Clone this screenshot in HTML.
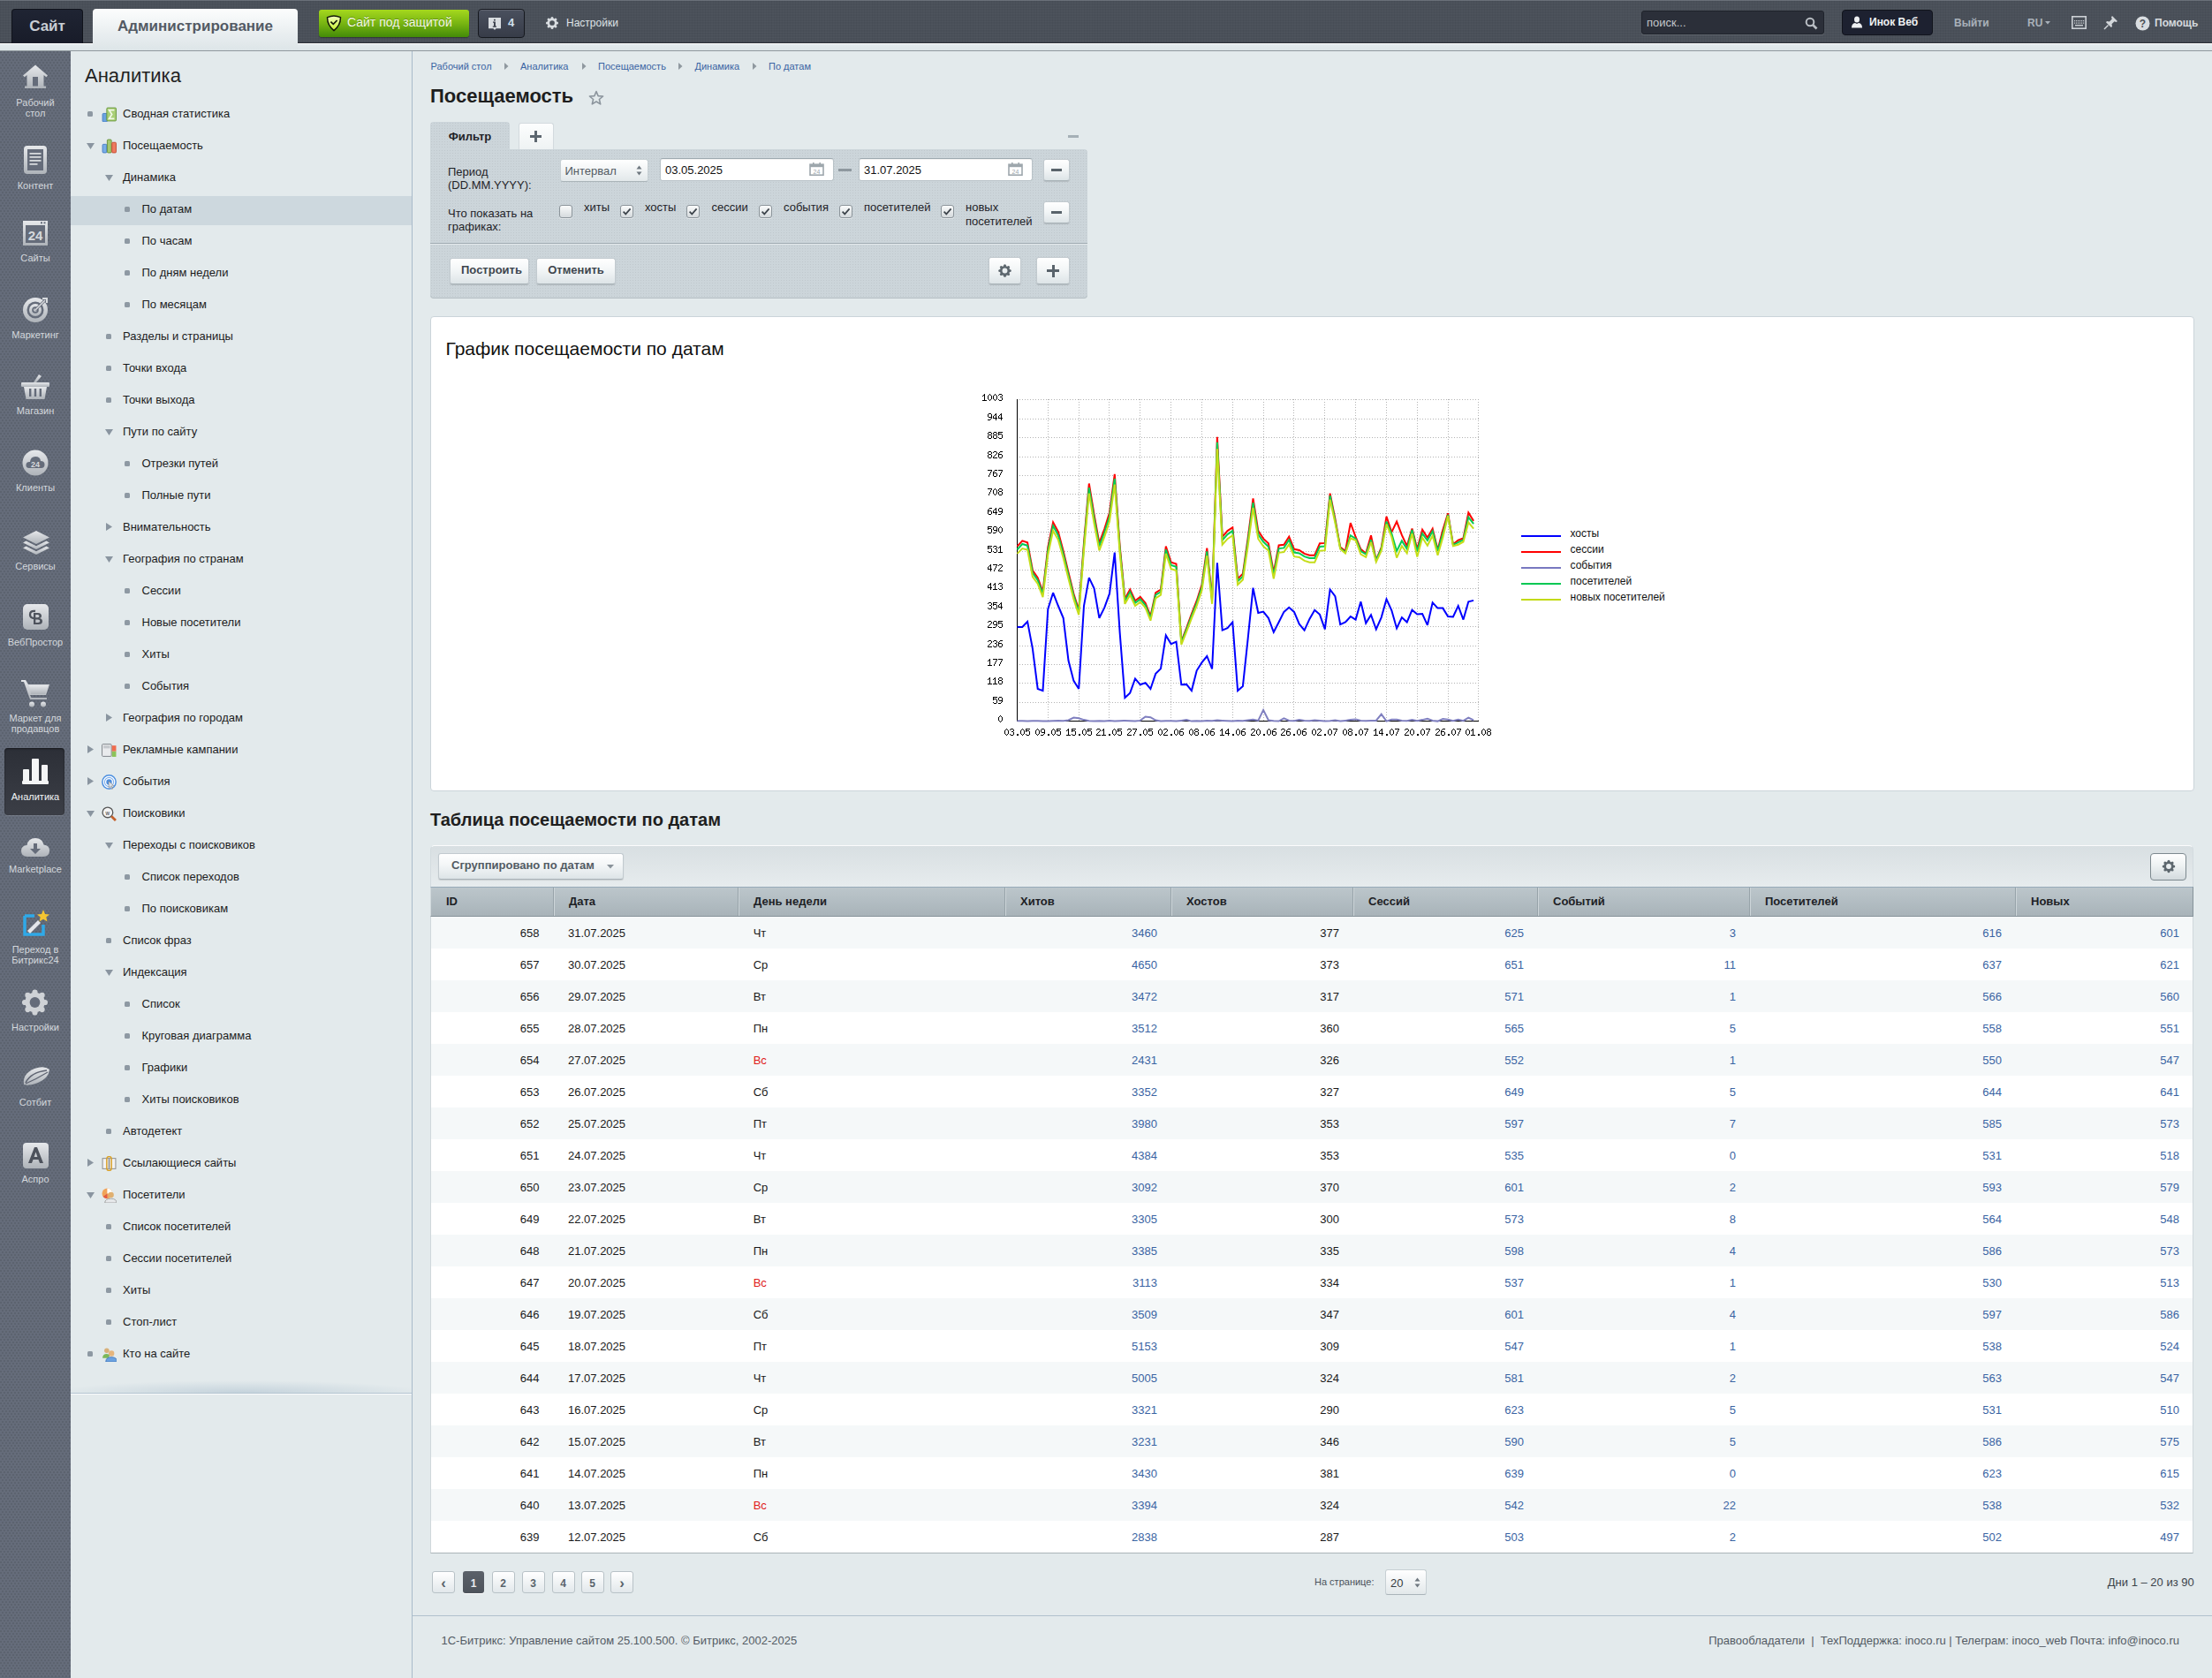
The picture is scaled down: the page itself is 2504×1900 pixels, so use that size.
<!DOCTYPE html>
<html lang="ru"><head><meta charset="utf-8"><title>Посещаемость</title>
<style>
*{box-sizing:border-box}
html,body{margin:0;padding:0}
body{width:2504px;height:1900px;overflow:hidden;position:relative;background:#e3eaec;font-family:"Liberation Sans",sans-serif;color:#000}
.a{position:absolute}
.t{position:absolute;white-space:nowrap;line-height:1}
/* header */
#hdr{left:0;top:0;width:2504px;height:49px;background-color:#4a5059;box-shadow:inset 0 1px 0 #6a7079,inset 0 -1px 0 #2b2f37;
 background-image:repeating-linear-gradient(0deg,rgba(255,255,255,.025) 0 1px,transparent 1px 3px),repeating-linear-gradient(90deg,rgba(0,0,0,.04) 0 1px,transparent 1px 3px);}
#strip{left:0;top:49px;width:2504px;height:9px;background:linear-gradient(#fdfefe 0,#fdfefe 1px,#e4ebee 1px,#dde5e8 100%);border-bottom:1px solid #8f989d}
#side{left:0;top:58px;width:80px;height:1842px;background:#656c7a;
 background-image:radial-gradient(circle at 1px 1px,rgba(0,0,0,.09) 0.7px,transparent 1px),radial-gradient(circle at 3px 4px,rgba(0,0,0,.09) 0.7px,transparent 1px);background-size:4px 6px}
#menu{left:80px;top:58px;width:387px;height:1842px;background:#e3eaec;border-right:1px solid #a9bbca}
#content{left:467px;top:58px;width:2037px;height:1842px;background:#e3eaec}
.sl{position:absolute;left:0;width:80px;text-align:center;font-size:11px;line-height:12px;color:#d3d7dc}
.mi{position:absolute;left:0;width:386px;height:36px;font-size:13px;line-height:36px;color:#1a1a1a;white-space:nowrap}
.mi .tx{position:absolute;top:0}
.bul{position:absolute;width:6px;height:6px;border-radius:1.5px;background:#8e99a3;top:15px}
.tri{position:absolute;top:15px;width:0;height:0;border-left:5px solid transparent;border-right:5px solid transparent;border-top:7px solid #8a95a0}
.trir{position:absolute;top:13px;width:0;height:0;border-top:5px solid transparent;border-bottom:5px solid transparent;border-left:7px solid #8a95a0}
.ico{position:absolute;top:10px;width:17px;height:17px}
</style></head><body>
<div id="hdr" class="a">
<div class="a" style="left:13px;top:10px;width:81px;height:39px;background:linear-gradient(#1f2433,#181c29);border:1px solid #10131b;border-bottom:none;border-radius:4px 4px 0 0;"></div>
<div class="t" style="left:13.0px;top:20.61px;font-size:17px;color:#c9ced4;font-weight:bold;width:81px;text-align:center;">Сайт</div>
<div class="a" style="left:105px;top:10px;width:232px;height:47px;background:linear-gradient(#fcfdfd,#e9eef0 60%,#dde5e8);border-radius:4px 4px 0 0;z-index:2"></div>
<div class="t" style="left:105.0px;top:20.61px;font-size:17px;color:#535a64;font-weight:bold;width:232px;text-align:center;z-index:3">Администрирование</div>
<div class="a" style="left:361px;top:11px;width:170px;height:31px;background:linear-gradient(#a5d81e,#78b512 50%,#438b08);border-radius:3px;box-shadow:0 1px 1px rgba(0,0,0,.35);"></div>
<svg class="a" style="left:369px;top:16px" width="18" height="20" viewBox="0 0 18 20"><defs><linearGradient id="shg" x1="0" y1="0" x2="0" y2="1"><stop offset="0" stop-color="#f4ffc0"/><stop offset="1" stop-color="#c4f02a"/></linearGradient></defs><path d="M1.6 3.6 Q9 0.4 16.4 3.6 Q16.8 12 9 18.6 Q1.2 12 1.6 3.6 Z" fill="url(#shg)" stroke="#141a0a" stroke-width="1.5"/><path d="M5.4 8.6 L8.3 11.4 L12.6 7" fill="none" stroke="#141a0a" stroke-width="1.7"/></svg>
<div class="t" style="left:393px;top:18.15px;font-size:14px;color:#f3f8e6;text-shadow:0 -1px 0 rgba(0,0,0,.25)">Сайт под защитой</div>
<div class="a" style="left:541px;top:10px;width:53px;height:33px;background:linear-gradient(#4a505e,#373c48);border:1px solid #16191f;border-radius:4px;box-shadow:inset 0 1px 0 rgba(255,255,255,.12);"></div>
<svg class="a" style="left:552px;top:19px" width="16" height="16" viewBox="0 0 16 16"><path d="M1 1 H15 V13.2 H9.6 L8 14.9 L6.4 13.2 H1 Z" fill="#d9dde1"/><rect x="7" y="2.8" width="1.8" height="1.7" fill="#3a3f4b"/><path d="M6 5.6 H8.9 V10.6 H10 V11.8 H5.8 V10.6 H7 V6.8 H6 Z" fill="#3a3f4b"/></svg>
<div class="t" style="left:575px;top:19.00px;font-size:13px;color:#d3e0ee;font-weight:bold;">4</div>
<svg class="a" style="left:0;top:0;overflow:visible" width="1" height="1"><circle cx="625" cy="26" r="5.44" fill="#d9dde1"/><circle cx="630.58" cy="26.00" r="1.50" fill="#d9dde1"/><circle cx="628.94" cy="29.94" r="1.50" fill="#d9dde1"/><circle cx="625.00" cy="31.58" r="1.50" fill="#d9dde1"/><circle cx="621.06" cy="29.94" r="1.50" fill="#d9dde1"/><circle cx="619.42" cy="26.00" r="1.50" fill="#d9dde1"/><circle cx="621.06" cy="22.06" r="1.50" fill="#d9dde1"/><circle cx="625.00" cy="20.42" r="1.50" fill="#d9dde1"/><circle cx="628.94" cy="22.06" r="1.50" fill="#d9dde1"/><circle cx="625" cy="26" r="2.86" fill="#4a5059"/></svg>
<div class="t" style="left:641px;top:19.84px;font-size:12px;color:#dfe3e7;">Настройки</div>
<div class="a" style="left:1858px;top:12px;width:207px;height:27px;background:#2b2f39;border:1px solid #1f232b;border-radius:3px;box-shadow:0 1px 0 rgba(255,255,255,.12);"></div>
<div class="t" style="left:1864px;top:19.00px;font-size:13px;color:#c3c7cc;">поиск...</div>
<svg class="a" style="left:2043px;top:19px" width="15" height="15" viewBox="0 0 15 15"><circle cx="6" cy="6" r="4.3" fill="none" stroke="#b9bec4" stroke-width="2"/><path d="M9 9 L13.5 13.5" stroke="#b9bec4" stroke-width="2.6"/></svg>
<div class="a" style="left:2085px;top:11px;width:103px;height:29px;background:#1d2130;border:1px solid #11141c;border-radius:4px;"></div>
<svg class="a" style="left:2095px;top:18px" width="14" height="14" viewBox="0 0 14 14"><ellipse cx="7" cy="4" rx="3" ry="3.6" fill="#eef0f2"/><path d="M1 13.5 Q1 8.5 5 8 L7 9 L9 8 Q13 8.5 13 13.5 Z" fill="#eef0f2"/></svg>
<div class="t" style="left:2116px;top:18.84px;font-size:12px;color:#f1f3f5;font-weight:bold;">Инок Веб</div>
<div class="t" style="left:2212px;top:19.84px;font-size:12px;color:#a9b1ba;font-weight:bold;">Выйти</div>
<div class="t" style="left:2295px;top:19.84px;font-size:12px;color:#a9b1ba;font-weight:bold;">RU</div>
<svg class="a" style="left:2315px;top:24px" width="6" height="4"><path d="M0 0 H6 L3 3.5Z" fill="#a9b1ba"/></svg>
<svg class="a" style="left:2345px;top:18px" width="17" height="15" viewBox="0 0 17 15"><rect x="0.8" y="0.8" width="15.4" height="13.4" fill="none" stroke="#ccd0d5" stroke-width="1.6"/><rect x="3" y="5" width="1.2" height="1.2" fill="#ccd0d5"/><rect x="5" y="5" width="1.2" height="1.2" fill="#ccd0d5"/><rect x="7" y="5" width="1.2" height="1.2" fill="#ccd0d5"/><rect x="9" y="5" width="1.2" height="1.2" fill="#ccd0d5"/><rect x="11" y="5" width="1.2" height="1.2" fill="#ccd0d5"/><rect x="13" y="5" width="1.2" height="1.2" fill="#ccd0d5"/><rect x="3" y="7.5" width="1.2" height="1.2" fill="#ccd0d5"/><rect x="5" y="7.5" width="1.2" height="1.2" fill="#ccd0d5"/><rect x="7" y="7.5" width="1.2" height="1.2" fill="#ccd0d5"/><rect x="9" y="7.5" width="1.2" height="1.2" fill="#ccd0d5"/><rect x="11" y="7.5" width="1.2" height="1.2" fill="#ccd0d5"/><rect x="13" y="7.5" width="1.2" height="1.2" fill="#ccd0d5"/><rect x="4" y="10" width="9" height="1.4" fill="#ccd0d5"/></svg>
<svg class="a" style="left:2381px;top:17px" width="17" height="17" viewBox="0 0 17 17"><path d="M10 1 L16 7 L14.5 8 L12.5 7.2 L9.5 10.2 L10 13 L8.8 14 L3 8.2 L4 7 L6.8 7.5 L9.8 4.5 L9 2.5 Z" fill="#d3d7db"/><path d="M5.5 11.5 L1 16" stroke="#d3d7db" stroke-width="1.5"/></svg>
<svg class="a" style="left:2417px;top:18px" width="17" height="17" viewBox="0 0 17 17"><circle cx="8.5" cy="8.5" r="8" fill="#d9dde1"/><text x="8.5" y="13" text-anchor="middle" font-family="Liberation Sans" font-weight="bold" font-size="12" fill="#4b5058">?</text></svg>
<div class="t" style="left:2439px;top:19.84px;font-size:12px;color:#d6dade;font-weight:bold;">Помощь</div>
</div>
<div id="strip" class="a"></div>
<div id="side" class="a"></div>
<div class="a" style="left:5px;top:847px;width:68px;height:76px;background:linear-gradient(#2c2f37,#3b3e46);border-radius:4px;box-shadow:inset 0 1px 2px rgba(0,0,0,.5),0 1px 0 rgba(255,255,255,.12);"></div>
<svg class="a" style="left:26px;top:73px" width="28" height="27" viewBox="0 0 28 27"><defs><linearGradient id="sg" x1="0" y1="0" x2="0" y2="1"><stop offset="0" stop-color="#e6e8eb"/><stop offset="1" stop-color="#aeb3b9"/></linearGradient></defs><path d="M14 0.5 L28 12.5 L26.3 14.3 L23.5 12 V24.5 H26 V27 H2 V24.5 H4.5 V12 L1.7 14.3 L0 12.5 Z" fill="url(#sg)"/><rect x="11" y="14" width="6" height="10.5" fill="#656c7a"/></svg>
<svg class="a" style="left:27px;top:165px" width="26" height="32" viewBox="0 0 26 32"><defs><linearGradient id="sg" x1="0" y1="0" x2="0" y2="1"><stop offset="0" stop-color="#e6e8eb"/><stop offset="1" stop-color="#aeb3b9"/></linearGradient></defs><rect x="0" y="0" width="26" height="32" rx="4" fill="url(#sg)"/><rect x="4" y="4" width="18" height="24" fill="#656c7a"/><rect x="6.5" y="8" width="13" height="2" fill="url(#sg)"/><rect x="6.5" y="12" width="13" height="2" fill="url(#sg)"/><rect x="6.5" y="16" width="13" height="2" fill="url(#sg)"/><rect x="6.5" y="20" width="9" height="2" fill="url(#sg)"/></svg>
<svg class="a" style="left:26px;top:250px" width="28" height="28" viewBox="0 0 28 28"><defs><linearGradient id="sg" x1="0" y1="0" x2="0" y2="1"><stop offset="0" stop-color="#e6e8eb"/><stop offset="1" stop-color="#aeb3b9"/></linearGradient></defs><rect x="0" y="0" width="28" height="28" fill="url(#sg)"/><rect x="3" y="5" width="22" height="20" fill="#656c7a"/><rect x="20" y="1.3" width="2" height="2" fill="#656c7a"/><rect x="23.5" y="1.3" width="2" height="2" fill="#656c7a"/><text x="14" y="22" text-anchor="middle" font-family="Liberation Sans" font-weight="bold" font-size="15" fill="#d5d8dc">24</text></svg>
<svg class="a" style="left:25px;top:336px" width="30" height="30" viewBox="0 0 30 30"><defs><linearGradient id="sg" x1="0" y1="0" x2="0" y2="1"><stop offset="0" stop-color="#e6e8eb"/><stop offset="1" stop-color="#aeb3b9"/></linearGradient></defs><circle cx="15" cy="15" r="14" fill="url(#sg)"/><circle cx="15" cy="15" r="9.5" fill="#656c7a"/><circle cx="15" cy="15" r="7" fill="url(#sg)"/><circle cx="15" cy="15" r="3.8" fill="#656c7a"/><circle cx="15" cy="15" r="2" fill="url(#sg)"/><path d="M15 15 L26 4" stroke="#5f6472" stroke-width="3"/><path d="M15 15 L26 4" stroke="#d8dbde" stroke-width="1.6"/><path d="M23 2 L28 2 L28 7" fill="none" stroke="#d8dbde" stroke-width="2"/></svg>
<svg class="a" style="left:24px;top:423px" width="32" height="29" viewBox="0 0 32 29"><defs><linearGradient id="sg" x1="0" y1="0" x2="0" y2="1"><stop offset="0" stop-color="#e6e8eb"/><stop offset="1" stop-color="#aeb3b9"/></linearGradient></defs><path d="M20 1 L23 3 L17 10 L14 10 Z" fill="url(#sg)"/><rect x="0" y="10" width="32" height="5" rx="1" fill="url(#sg)"/><path d="M3 15 H29 L26.5 29 H5.5 Z" fill="url(#sg)"/><rect x="9" y="17" width="2.4" height="9" fill="#656c7a"/><rect x="14.8" y="17" width="2.4" height="9" fill="#656c7a"/><rect x="20.6" y="17" width="2.4" height="9" fill="#656c7a"/></svg>
<svg class="a" style="left:25px;top:509px" width="30" height="30" viewBox="0 0 30 30"><defs><linearGradient id="sg" x1="0" y1="0" x2="0" y2="1"><stop offset="0" stop-color="#e6e8eb"/><stop offset="1" stop-color="#aeb3b9"/></linearGradient></defs><circle cx="15" cy="15" r="14.5" fill="url(#sg)"/><path d="M8 21 Q4 21 4.5 17 Q5 13.5 9 14 Q9.5 8 15 8 Q20.5 8 21 13 Q25.5 13 25.5 17 Q25.5 21 21.5 21 Z" fill="#656c7a"/><text x="15" y="19.5" text-anchor="middle" font-family="Liberation Sans" font-weight="bold" font-size="9" fill="#d5d8dc">24</text></svg>
<svg class="a" style="left:25px;top:600px" width="32" height="30" viewBox="0 0 32 30"><defs><linearGradient id="sg" x1="0" y1="0" x2="0" y2="1"><stop offset="0" stop-color="#e6e8eb"/><stop offset="1" stop-color="#aeb3b9"/></linearGradient></defs><path d="M16 1 L31 8.5 L16 16 L1 8.5 Z" fill="url(#sg)"/><path d="M4.5 12.5 L1 14.5 L16 22 L31 14.5 L27.5 12.5 L16 18.3 Z" fill="url(#sg)"/><path d="M4.5 18.5 L1 20.5 L16 28 L31 20.5 L27.5 18.5 L16 24.3 Z" fill="url(#sg)"/></svg>
<svg class="a" style="left:26px;top:684px" width="29" height="29" viewBox="0 0 29 29"><defs><linearGradient id="sg" x1="0" y1="0" x2="0" y2="1"><stop offset="0" stop-color="#e6e8eb"/><stop offset="1" stop-color="#aeb3b9"/></linearGradient></defs><rect x="0" y="0" width="29" height="29" rx="5" fill="url(#sg)"/><path d="M14 8 Q8 7 8 12 Q8 16 13 16" fill="none" stroke="#4d525c" stroke-width="2.3"/><path d="M12 10 H17 Q21 10 21 13.5 Q21 16 18 16 Q22 16 22 19.5 Q22 23 17.5 23 H12 Z M14.3 17.5 V21 H17 Q19.3 21 19.3 19.2 Q19.3 17.5 17 17.5 Z M14.3 12 V15.3 H16.5 Q18.5 15.3 18.5 13.6 Q18.5 12 16.5 12 Z" fill="#4d525c"/></svg>
<svg class="a" style="left:24px;top:769px" width="32" height="32" viewBox="0 0 32 32"><defs><linearGradient id="sg" x1="0" y1="0" x2="0" y2="1"><stop offset="0" stop-color="#e6e8eb"/><stop offset="1" stop-color="#aeb3b9"/></linearGradient></defs><path d="M0 1 H5 L8 6 H32 L28 18 H10 L11.5 21 H29 V23 H10 L3 3 H0 Z" fill="url(#sg)"/><path d="M9 7 H30 L27 17 H11 Z" fill="url(#sg)"/><circle cx="12" cy="28.5" r="3" fill="url(#sg)"/><circle cx="25" cy="28.5" r="3" fill="url(#sg)"/></svg>
<svg class="a" style="left:24px;top:858px" width="32" height="31" viewBox="0 0 32 31"><defs><linearGradient id="sg" x1="0" y1="0" x2="0" y2="1"><stop offset="0" stop-color="#e6e8eb"/><stop offset="1" stop-color="#aeb3b9"/></linearGradient></defs><rect x="1" y="26" width="30" height="4" rx="1" fill="#f4f5f6"/><rect x="2" y="13" width="7" height="14" rx="1" fill="#f4f5f6"/><rect x="12" y="1" width="8" height="26" rx="1" fill="#f4f5f6"/><rect x="23" y="8" width="7" height="19" rx="1" fill="#f4f5f6"/></svg>
<svg class="a" style="left:24px;top:947px" width="32" height="24" viewBox="0 0 32 24"><defs><linearGradient id="sg" x1="0" y1="0" x2="0" y2="1"><stop offset="0" stop-color="#e6e8eb"/><stop offset="1" stop-color="#aeb3b9"/></linearGradient></defs><path d="M7 23 Q0 23 0 16.5 Q0 10.5 6.5 10 Q8 2 16 2 Q24 2 25.5 9.5 Q32 10 32 16.5 Q32 23 25 23 Z" fill="url(#sg)"/><path d="M14 8 H18 V14 H22 L16 20 L10 14 H14 Z" fill="#656c7a"/></svg>
<svg class="a" style="left:25px;top:1029px" width="32" height="31" viewBox="0 0 32 31"><defs><linearGradient id="sg" x1="0" y1="0" x2="0" y2="1"><stop offset="0" stop-color="#e6e8eb"/><stop offset="1" stop-color="#aeb3b9"/></linearGradient></defs><path d="M3 8 V29 H24 V18" fill="none" stroke="#2fa9e8" stroke-width="3.5"/><path d="M3 8 H14" stroke="#2fa9e8" stroke-width="3.5"/><path d="M6 25 L18 13 L21 16 L9 28 Z" fill="#e3e6ea"/><path d="M24 1 L26 6 L31 6.5 L27.3 9.5 L28.5 14.5 L24 11.8 L19.5 14.5 L20.7 9.5 L17 6.5 L22 6 Z" fill="#f4c531"/></svg>
<svg class="a" style="left:0;top:0;overflow:visible" width="1" height="1"><circle cx="39.5" cy="1135" r="11.20" fill="#cfd2d6"/><circle cx="50.98" cy="1135.00" r="3.08" fill="#cfd2d6"/><circle cx="47.62" cy="1143.12" r="3.08" fill="#cfd2d6"/><circle cx="39.50" cy="1146.48" r="3.08" fill="#cfd2d6"/><circle cx="31.38" cy="1143.12" r="3.08" fill="#cfd2d6"/><circle cx="28.02" cy="1135.00" r="3.08" fill="#cfd2d6"/><circle cx="31.38" cy="1126.88" r="3.08" fill="#cfd2d6"/><circle cx="39.50" cy="1123.52" r="3.08" fill="#cfd2d6"/><circle cx="47.62" cy="1126.88" r="3.08" fill="#cfd2d6"/><circle cx="39.5" cy="1135" r="5.88" fill="#656c7a"/></svg>
<svg class="a" style="left:25px;top:1206px" width="32" height="25" viewBox="0 0 32 25"><defs><linearGradient id="sg" x1="0" y1="0" x2="0" y2="1"><stop offset="0" stop-color="#e6e8eb"/><stop offset="1" stop-color="#aeb3b9"/></linearGradient></defs><path d="M2 22 Q0 10 14 4 Q25 0 31 5 Q30 15 18 20 Q8 24 2 22 Z" fill="url(#sg)"/><path d="M4 20 Q10 8 28 6" fill="none" stroke="#5f6472" stroke-width="1.6"/><path d="M4 21 Q16 16 29 8" fill="none" stroke="#5f6472" stroke-width="1.2"/></svg>
<svg class="a" style="left:26px;top:1294px" width="29" height="29" viewBox="0 0 29 29"><defs><linearGradient id="sg" x1="0" y1="0" x2="0" y2="1"><stop offset="0" stop-color="#e6e8eb"/><stop offset="1" stop-color="#aeb3b9"/></linearGradient></defs><rect x="0" y="0" width="29" height="29" rx="4" fill="url(#sg)"/><path d="M6 23 L13 5 H16 L23 23 H19 L17.5 19 H11.5 L10 23 Z M12.6 16 H16.4 L14.5 10.5 Z" fill="#4d525c"/></svg>
<div class="t" style="left:0.0px;top:111.19px;font-size:11px;color:#d4d8dd;width:80px;text-align:center;">Рабочий</div>
<div class="t" style="left:0.0px;top:123.19px;font-size:11px;color:#d4d8dd;width:80px;text-align:center;">стол</div>
<div class="t" style="left:0.0px;top:204.69px;font-size:11px;color:#d4d8dd;width:80px;text-align:center;">Контент</div>
<div class="t" style="left:0.0px;top:286.69px;font-size:11px;color:#d4d8dd;width:80px;text-align:center;">Сайты</div>
<div class="t" style="left:0.0px;top:373.69px;font-size:11px;color:#d4d8dd;width:80px;text-align:center;">Маркетинг</div>
<div class="t" style="left:0.0px;top:459.69px;font-size:11px;color:#d4d8dd;width:80px;text-align:center;">Магазин</div>
<div class="t" style="left:0.0px;top:546.69px;font-size:11px;color:#d4d8dd;width:80px;text-align:center;">Клиенты</div>
<div class="t" style="left:0.0px;top:635.69px;font-size:11px;color:#d4d8dd;width:80px;text-align:center;">Сервисы</div>
<div class="t" style="left:0.0px;top:721.69px;font-size:11px;color:#d4d8dd;width:80px;text-align:center;">ВебПростор</div>
<div class="t" style="left:0.0px;top:807.69px;font-size:11px;color:#d4d8dd;width:80px;text-align:center;">Маркет для</div>
<div class="t" style="left:0.0px;top:819.69px;font-size:11px;color:#d4d8dd;width:80px;text-align:center;">продавцов</div>
<div class="t" style="left:0.0px;top:896.69px;font-size:11px;color:#f2f4f6;width:80px;text-align:center;">Аналитика</div>
<div class="t" style="left:0.0px;top:978.69px;font-size:11px;color:#d4d8dd;width:80px;text-align:center;">Marketplace</div>
<div class="t" style="left:0.0px;top:1069.69px;font-size:11px;color:#d4d8dd;width:80px;text-align:center;">Переход в</div>
<div class="t" style="left:0.0px;top:1081.69px;font-size:11px;color:#d4d8dd;width:80px;text-align:center;">Битрикс24</div>
<div class="t" style="left:0.0px;top:1157.69px;font-size:11px;color:#d4d8dd;width:80px;text-align:center;">Настройки</div>
<div class="t" style="left:0.0px;top:1242.69px;font-size:11px;color:#d4d8dd;width:80px;text-align:center;">Сотбит</div>
<div class="t" style="left:0.0px;top:1329.69px;font-size:11px;color:#d4d8dd;width:80px;text-align:center;">Аспро</div>
<div id="menu" class="a"></div>
<div class="t" style="left:96px;top:75.38px;font-size:22px;color:#222;">Аналитика</div>
<div class="a" style="left:80px;top:222px;width:386px;height:33px;background:#cdd8de;"></div>
<div class="a" style="left:99px;top:126px;width:6px;height:6px;background:#8e99a3;border-radius:1.5px;"></div>
<svg class="a" style="left:115px;top:120.7px" width="17" height="17" viewBox="0 0 16 16"><rect x="1" y="7" width="5" height="9" rx="1" fill="#6aa2e0" stroke="#3f78c0" stroke-width=".8"/><rect x="5.5" y="1" width="10" height="14" rx="1" fill="#a9cf76" stroke="#5f8f33" stroke-width=".8"/><path d="M13.5 3.5 H8 L11 8 L8 12.5 H13.5" fill="none" stroke="#f2f8e8" stroke-width="1.6"/></svg>
<div class="t" style="left:139px;top:122.10px;font-size:13px;color:#1c1c1c;">Сводная статистика</div>
<svg class="a" style="left:97.5px;top:162.2px" width="9" height="7"><path d="M0 0 H9 L4.5 7 Z" fill="#8a95a0"/></svg>
<svg class="a" style="left:115px;top:156.7px" width="17" height="17" viewBox="0 0 16 16"><rect x="1" y="6" width="4.5" height="9" rx="1" fill="#79aee8" stroke="#3c74c0" stroke-width=".8"/><rect x="6" y="1" width="4.5" height="14" rx="1" fill="#a5c86f" stroke="#5d8a2f" stroke-width=".8"/><rect x="11" y="4" width="4.5" height="11" rx="1" fill="#ee7a5f" stroke="#c0452c" stroke-width=".8"/></svg>
<div class="t" style="left:139px;top:158.10px;font-size:13px;color:#1c1c1c;">Посещаемость</div>
<svg class="a" style="left:118.5px;top:198.2px" width="9" height="7"><path d="M0 0 H9 L4.5 7 Z" fill="#8a95a0"/></svg>
<div class="t" style="left:139px;top:194.10px;font-size:13px;color:#1c1c1c;">Динамика</div>
<div class="a" style="left:141px;top:234px;width:6px;height:6px;background:#8e99a3;border-radius:1.5px;"></div>
<div class="t" style="left:160.5px;top:230.10px;font-size:13px;color:#1c1c1c;">По датам</div>
<div class="a" style="left:141px;top:270px;width:6px;height:6px;background:#8e99a3;border-radius:1.5px;"></div>
<div class="t" style="left:160.5px;top:266.10px;font-size:13px;color:#1c1c1c;">По часам</div>
<div class="a" style="left:141px;top:306px;width:6px;height:6px;background:#8e99a3;border-radius:1.5px;"></div>
<div class="t" style="left:160.5px;top:302.10px;font-size:13px;color:#1c1c1c;">По дням недели</div>
<div class="a" style="left:141px;top:342px;width:6px;height:6px;background:#8e99a3;border-radius:1.5px;"></div>
<div class="t" style="left:160.5px;top:338.10px;font-size:13px;color:#1c1c1c;">По месяцам</div>
<div class="a" style="left:120px;top:378px;width:6px;height:6px;background:#8e99a3;border-radius:1.5px;"></div>
<div class="t" style="left:139px;top:374.10px;font-size:13px;color:#1c1c1c;">Разделы и страницы</div>
<div class="a" style="left:120px;top:414px;width:6px;height:6px;background:#8e99a3;border-radius:1.5px;"></div>
<div class="t" style="left:139px;top:410.10px;font-size:13px;color:#1c1c1c;">Точки входа</div>
<div class="a" style="left:120px;top:450px;width:6px;height:6px;background:#8e99a3;border-radius:1.5px;"></div>
<div class="t" style="left:139px;top:446.10px;font-size:13px;color:#1c1c1c;">Точки выхода</div>
<svg class="a" style="left:118.5px;top:486.2px" width="9" height="7"><path d="M0 0 H9 L4.5 7 Z" fill="#8a95a0"/></svg>
<div class="t" style="left:139px;top:482.10px;font-size:13px;color:#1c1c1c;">Пути по сайту</div>
<div class="a" style="left:141px;top:522px;width:6px;height:6px;background:#8e99a3;border-radius:1.5px;"></div>
<div class="t" style="left:160.5px;top:518.10px;font-size:13px;color:#1c1c1c;">Отрезки путей</div>
<div class="a" style="left:141px;top:558px;width:6px;height:6px;background:#8e99a3;border-radius:1.5px;"></div>
<div class="t" style="left:160.5px;top:554.10px;font-size:13px;color:#1c1c1c;">Полные пути</div>
<svg class="a" style="left:120px;top:592.2px" width="7" height="9"><path d="M0 0 V9 L7 4.5 Z" fill="#8a95a0"/></svg>
<div class="t" style="left:139px;top:590.10px;font-size:13px;color:#1c1c1c;">Внимательность</div>
<svg class="a" style="left:118.5px;top:630.2px" width="9" height="7"><path d="M0 0 H9 L4.5 7 Z" fill="#8a95a0"/></svg>
<div class="t" style="left:139px;top:626.10px;font-size:13px;color:#1c1c1c;">География по странам</div>
<div class="a" style="left:141px;top:666px;width:6px;height:6px;background:#8e99a3;border-radius:1.5px;"></div>
<div class="t" style="left:160.5px;top:662.10px;font-size:13px;color:#1c1c1c;">Сессии</div>
<div class="a" style="left:141px;top:702px;width:6px;height:6px;background:#8e99a3;border-radius:1.5px;"></div>
<div class="t" style="left:160.5px;top:698.10px;font-size:13px;color:#1c1c1c;">Новые посетители</div>
<div class="a" style="left:141px;top:738px;width:6px;height:6px;background:#8e99a3;border-radius:1.5px;"></div>
<div class="t" style="left:160.5px;top:734.10px;font-size:13px;color:#1c1c1c;">Хиты</div>
<div class="a" style="left:141px;top:774px;width:6px;height:6px;background:#8e99a3;border-radius:1.5px;"></div>
<div class="t" style="left:160.5px;top:770.10px;font-size:13px;color:#1c1c1c;">События</div>
<svg class="a" style="left:120px;top:808.2px" width="7" height="9"><path d="M0 0 V9 L7 4.5 Z" fill="#8a95a0"/></svg>
<div class="t" style="left:139px;top:806.10px;font-size:13px;color:#1c1c1c;">География по городам</div>
<svg class="a" style="left:99px;top:844.2px" width="7" height="9"><path d="M0 0 V9 L7 4.5 Z" fill="#8a95a0"/></svg>
<svg class="a" style="left:115px;top:840.7px" width="17" height="17" viewBox="0 0 16 16"><rect x="0.5" y="1.5" width="10" height="13" rx="1" fill="#e9ebed" stroke="#7d8288" stroke-width=".9"/><rect x="2" y="3" width="7" height="3" fill="#c4c8cc"/><rect x="11" y="9" width="4.5" height="6" fill="#8cc35a"/><rect x="11" y="3" width="4.5" height="6" fill="#ef6d4f"/></svg>
<div class="t" style="left:139px;top:842.10px;font-size:13px;color:#1c1c1c;">Рекламные кампании</div>
<svg class="a" style="left:99px;top:880.2px" width="7" height="9"><path d="M0 0 V9 L7 4.5 Z" fill="#8a95a0"/></svg>
<svg class="a" style="left:115px;top:876.7px" width="17" height="17" viewBox="0 0 16 16"><circle cx="8" cy="8" r="7.2" fill="#fff" stroke="#4d8fe0" stroke-width="1.4"/><circle cx="8" cy="8" r="4.8" fill="none" stroke="#7fb0ec" stroke-width="1"/><circle cx="8" cy="8" r="3" fill="#4d8fe0"/><path d="M7.5 7 L13 12 L10.5 12.3 L12 15 L11 15.5 L9.6 12.8 L7.8 14.5 Z" fill="#dfe2e5" stroke="#777" stroke-width=".5"/></svg>
<div class="t" style="left:139px;top:878.10px;font-size:13px;color:#1c1c1c;">События</div>
<svg class="a" style="left:97.5px;top:918.2px" width="9" height="7"><path d="M0 0 H9 L4.5 7 Z" fill="#8a95a0"/></svg>
<svg class="a" style="left:115px;top:912.7px" width="17" height="17" viewBox="0 0 16 16"><circle cx="6.5" cy="6.5" r="5.5" fill="#f4f4f4" stroke="#555" stroke-width="1.2"/><path d="M10.5 10.5 L15 15" stroke="#c5612c" stroke-width="2.6"/><text x="6.5" y="9" text-anchor="middle" font-size="6" font-family="Liberation Sans" fill="#333">w</text></svg>
<div class="t" style="left:139px;top:914.10px;font-size:13px;color:#1c1c1c;">Поисковики</div>
<svg class="a" style="left:118.5px;top:954.2px" width="9" height="7"><path d="M0 0 H9 L4.5 7 Z" fill="#8a95a0"/></svg>
<div class="t" style="left:139px;top:950.10px;font-size:13px;color:#1c1c1c;">Переходы с поисковиков</div>
<div class="a" style="left:141px;top:990px;width:6px;height:6px;background:#8e99a3;border-radius:1.5px;"></div>
<div class="t" style="left:160.5px;top:986.10px;font-size:13px;color:#1c1c1c;">Список переходов</div>
<div class="a" style="left:141px;top:1026px;width:6px;height:6px;background:#8e99a3;border-radius:1.5px;"></div>
<div class="t" style="left:160.5px;top:1022.10px;font-size:13px;color:#1c1c1c;">По поисковикам</div>
<div class="a" style="left:120px;top:1062px;width:6px;height:6px;background:#8e99a3;border-radius:1.5px;"></div>
<div class="t" style="left:139px;top:1058.10px;font-size:13px;color:#1c1c1c;">Список фраз</div>
<svg class="a" style="left:118.5px;top:1098.2px" width="9" height="7"><path d="M0 0 H9 L4.5 7 Z" fill="#8a95a0"/></svg>
<div class="t" style="left:139px;top:1094.10px;font-size:13px;color:#1c1c1c;">Индексация</div>
<div class="a" style="left:141px;top:1134px;width:6px;height:6px;background:#8e99a3;border-radius:1.5px;"></div>
<div class="t" style="left:160.5px;top:1130.10px;font-size:13px;color:#1c1c1c;">Список</div>
<div class="a" style="left:141px;top:1170px;width:6px;height:6px;background:#8e99a3;border-radius:1.5px;"></div>
<div class="t" style="left:160.5px;top:1166.10px;font-size:13px;color:#1c1c1c;">Круговая диаграмма</div>
<div class="a" style="left:141px;top:1206px;width:6px;height:6px;background:#8e99a3;border-radius:1.5px;"></div>
<div class="t" style="left:160.5px;top:1202.10px;font-size:13px;color:#1c1c1c;">Графики</div>
<div class="a" style="left:141px;top:1242px;width:6px;height:6px;background:#8e99a3;border-radius:1.5px;"></div>
<div class="t" style="left:160.5px;top:1238.10px;font-size:13px;color:#1c1c1c;">Хиты поисковиков</div>
<div class="a" style="left:120px;top:1278px;width:6px;height:6px;background:#8e99a3;border-radius:1.5px;"></div>
<div class="t" style="left:139px;top:1274.10px;font-size:13px;color:#1c1c1c;">Автодетект</div>
<svg class="a" style="left:99px;top:1312.2px" width="7" height="9"><path d="M0 0 V9 L7 4.5 Z" fill="#8a95a0"/></svg>
<svg class="a" style="left:115px;top:1308.7px" width="17" height="17" viewBox="0 0 16 16"><rect x="1" y="2.5" width="14" height="11" fill="#f2f2f2" stroke="#8a8a8a" stroke-width=".9"/><rect x="5.5" y="0.5" width="5" height="15" rx="2.5" fill="none" stroke="#d9a12a" stroke-width="1.4"/><rect x="7.3" y="3" width="1.4" height="10" fill="#888"/></svg>
<div class="t" style="left:139px;top:1310.10px;font-size:13px;color:#1c1c1c;">Ссылающиеся сайты</div>
<svg class="a" style="left:97.5px;top:1350.2px" width="9" height="7"><path d="M0 0 H9 L4.5 7 Z" fill="#8a95a0"/></svg>
<svg class="a" style="left:115px;top:1344.7px" width="17" height="17" viewBox="0 0 16 16"><circle cx="6" cy="6" r="5.5" fill="#f0a45a"/><path d="M6 6 L6 0.5 A5.5 5.5 0 0 1 11.5 6 Z" fill="#fff"/><path d="M6 6 L1.5 9.5 A5.5 5.5 0 0 0 6 11.5 Z" fill="#e25c45"/><circle cx="10" cy="7.5" r="3" fill="#e0b070"/><path d="M3.5 16 Q3.5 11.5 10 11.5 Q16 11.5 16 16 Z" fill="#e6e8ea" stroke="#999" stroke-width=".8"/></svg>
<div class="t" style="left:139px;top:1346.10px;font-size:13px;color:#1c1c1c;">Посетители</div>
<div class="a" style="left:120px;top:1386px;width:6px;height:6px;background:#8e99a3;border-radius:1.5px;"></div>
<div class="t" style="left:139px;top:1382.10px;font-size:13px;color:#1c1c1c;">Список посетителей</div>
<div class="a" style="left:120px;top:1422px;width:6px;height:6px;background:#8e99a3;border-radius:1.5px;"></div>
<div class="t" style="left:139px;top:1418.10px;font-size:13px;color:#1c1c1c;">Сессии посетителей</div>
<div class="a" style="left:120px;top:1458px;width:6px;height:6px;background:#8e99a3;border-radius:1.5px;"></div>
<div class="t" style="left:139px;top:1454.10px;font-size:13px;color:#1c1c1c;">Хиты</div>
<div class="a" style="left:120px;top:1494px;width:6px;height:6px;background:#8e99a3;border-radius:1.5px;"></div>
<div class="t" style="left:139px;top:1490.10px;font-size:13px;color:#1c1c1c;">Стоп-лист</div>
<div class="a" style="left:99px;top:1530px;width:6px;height:6px;background:#8e99a3;border-radius:1.5px;"></div>
<svg class="a" style="left:115px;top:1524.7px" width="17" height="17" viewBox="0 0 16 16"><circle cx="5.5" cy="4" r="2.6" fill="#d8b07a"/><path d="M1 12 Q1 7.5 5.5 7.5 Q8 7.5 9 9 L7 12 Z" fill="#7cb85a"/><circle cx="10.5" cy="7" r="3" fill="#e5b57d"/><path d="M4.5 16 Q4.5 11 10.5 11 Q16.5 11 16.5 16 Z" fill="#6ba2e0" stroke="#3d74b8" stroke-width=".8"/></svg>
<div class="t" style="left:139px;top:1526.10px;font-size:13px;color:#1c1c1c;">Кто на сайте</div>
<div class="a" style="left:80px;top:1563px;width:386px;height:14px;background:radial-gradient(ellipse 55% 100% at 50% 100%,rgba(150,175,195,.4),rgba(150,175,195,0) 100%);"></div>
<div class="a" style="left:80px;top:1577px;width:386px;height:2px;border-top:1px solid #b3c4d0;border-bottom:1px solid #fbfcfd;"></div>
<div id="content" class="a"></div>
<div class="t" style="left:487.5px;top:69.69px;font-size:11px;color:#3a64a3;">Рабочий стол</div>
<div class="t" style="left:589px;top:69.69px;font-size:11px;color:#3a64a3;">Аналитика</div>
<div class="t" style="left:677px;top:69.69px;font-size:11px;color:#3a64a3;">Посещаемость</div>
<div class="t" style="left:786.5px;top:69.69px;font-size:11px;color:#3a64a3;">Динамика</div>
<div class="t" style="left:870px;top:69.69px;font-size:11px;color:#3a64a3;">По датам</div>
<svg class="a" style="left:571px;top:71px" width="5" height="8"><path d="M0 0 L4.5 4 L0 8Z" fill="#8f989f"/></svg>
<svg class="a" style="left:659px;top:71px" width="5" height="8"><path d="M0 0 L4.5 4 L0 8Z" fill="#8f989f"/></svg>
<svg class="a" style="left:768px;top:71px" width="5" height="8"><path d="M0 0 L4.5 4 L0 8Z" fill="#8f989f"/></svg>
<svg class="a" style="left:852px;top:71px" width="5" height="8"><path d="M0 0 L4.5 4 L0 8Z" fill="#8f989f"/></svg>
<div class="t" style="left:487px;top:98.38px;font-size:22px;color:#1e1e1e;font-weight:bold;">Посещаемость</div>
<svg class="a" style="left:666px;top:102px" width="18" height="18" viewBox="0 0 18 18"><path d="M9 1.5 L11.1 6.6 L16.6 7 L12.4 10.5 L13.7 15.9 L9 13 L4.3 15.9 L5.6 10.5 L1.4 7 L6.9 6.6 Z" fill="none" stroke="#8c959d" stroke-width="1.6" stroke-linejoin="round"/></svg>
<div class="a" style="left:487px;top:138px;width:90px;height:32px;background:#ccd5da;background-image:radial-gradient(rgba(0,0,0,.06) 0.7px,transparent 0.9px);background-size:3px 3px;border-radius:4px 4px 0 0;"></div>
<div class="t" style="left:487.0px;top:147.50px;font-size:13px;color:#1f2328;font-weight:bold;width:90px;text-align:center;">Фильтр</div>
<div class="a" style="left:587px;top:139px;width:40px;height:31px;background:linear-gradient(#fdfefe,#eef2f3);border:1px solid #d3dade;border-bottom:none;border-radius:3px 3px 0 0;"></div>
<div class="a" style="left:600px;top:153px;width:13px;height:3px;background:#5d6770;"></div><div class="a" style="left:605px;top:148px;width:3px;height:13px;background:#5d6770;"></div>
<div class="a" style="left:1209px;top:153px;width:12px;height:3px;background:#a5b0b6;"></div>
<div class="a" style="left:487px;top:169px;width:744px;height:168px;background:#ccd5da;background-image:radial-gradient(rgba(0,0,0,.06) 0.7px,transparent 0.9px);background-size:3px 3px;border-radius:0 4px 4px 4px;box-shadow:0 1px 0 #b4bec3;"></div>
<div class="t" style="left:507px;top:188.00px;font-size:13px;color:#1f2328;">Период</div>
<div class="t" style="left:507px;top:202.50px;font-size:13px;color:#1f2328;">(DD.MM.YYYY):</div>
<div class="a" style="left:634px;top:180px;width:100px;height:26px;background:linear-gradient(#ffffff,#f1f4f5 50%,#e2e8ea);border:1px solid #c7d0d4;border-bottom-color:#aab4b9;border-radius:3px;"></div>
<div class="t" style="left:639.5px;top:186.50px;font-size:13px;color:#535b63;">Интервал</div>
<svg class="a" style="left:720px;top:187px" width="7" height="12"><path d="M0.5 4.5 L3.5 0.5 L6.5 4.5Z M0.5 7.5 L3.5 11.5 L6.5 7.5Z" fill="#6f7880"/></svg>
<div class="a" style="left:747px;top:179px;width:197px;height:26px;background:#fff;border:1px solid #b9c3c8;border-top-color:#9ea9af;border-radius:3px;box-shadow:inset 0 1px 1px rgba(0,0,0,.06);"></div>
<div class="t" style="left:753px;top:186.30px;font-size:13px;color:#111;">03.05.2025</div>
<svg class="a" style="left:916px;top:184px" width="17" height="15" viewBox="0 0 17 15"><rect x="1" y="2.2" width="15" height="12" fill="none" stroke="#9ea7ad" stroke-width="1.6"/><rect x="1" y="2.2" width="15" height="3" fill="#9ea7ad"/><rect x="4" y="0" width="1.6" height="3.5" fill="#9ea7ad"/><rect x="11.4" y="0" width="1.6" height="3.5" fill="#9ea7ad"/><text x="8.5" y="12.6" text-anchor="middle" font-family="Liberation Sans" font-size="7" fill="#9ea7ad">24</text></svg>
<div class="a" style="left:972px;top:179px;width:197px;height:26px;background:#fff;border:1px solid #b9c3c8;border-top-color:#9ea9af;border-radius:3px;box-shadow:inset 0 1px 1px rgba(0,0,0,.06);"></div>
<div class="t" style="left:978px;top:186.30px;font-size:13px;color:#111;">31.07.2025</div>
<svg class="a" style="left:1141px;top:184px" width="17" height="15" viewBox="0 0 17 15"><rect x="1" y="2.2" width="15" height="12" fill="none" stroke="#9ea7ad" stroke-width="1.6"/><rect x="1" y="2.2" width="15" height="3" fill="#9ea7ad"/><rect x="4" y="0" width="1.6" height="3.5" fill="#9ea7ad"/><rect x="11.4" y="0" width="1.6" height="3.5" fill="#9ea7ad"/><text x="8.5" y="12.6" text-anchor="middle" font-family="Liberation Sans" font-size="7" fill="#9ea7ad">24</text></svg>
<div class="a" style="left:949px;top:191px;width:15px;height:3px;background:#8e989f;"></div>
<div class="a" style="left:1181px;top:180px;width:30px;height:25px;background:linear-gradient(#ffffff,#f3f6f7 45%,#dde4e7);border:1px solid #c2cacf;border-bottom-color:#a9b3b8;border-radius:3px;box-shadow:0 1px 1px rgba(0,0,0,.12);"></div><div class="a" style="left:1190px;top:191px;width:12px;height:3px;background:#59636b;"></div>
<div class="t" style="left:507px;top:235.00px;font-size:13px;color:#1f2328;">Что показать на</div>
<div class="t" style="left:507px;top:250.00px;font-size:13px;color:#1f2328;">графиках:</div>
<div class="a" style="left:633px;top:232px;width:15px;height:15px;background:linear-gradient(#fafbfb,#d5dadd);border:1px solid #8c959b;border-radius:3px;box-shadow:0 1px 0 rgba(255,255,255,.5);"></div>
<div class="t" style="left:661px;top:228.00px;font-size:13px;color:#1f2328;">хиты</div>
<div class="a" style="left:702px;top:232px;width:15px;height:15px;background:linear-gradient(#fafbfb,#d5dadd);border:1px solid #8c959b;border-radius:3px;box-shadow:0 1px 0 rgba(255,255,255,.5);"></div><svg class="a" style="left:702px;top:232px" width="15" height="15"><path d="M3.6 7.6 L6.3 10.4 L11.6 4.4" fill="none" stroke="#3d444b" stroke-width="1.7"/></svg>
<div class="t" style="left:730px;top:228.00px;font-size:13px;color:#1f2328;">хосты</div>
<div class="a" style="left:777px;top:232px;width:15px;height:15px;background:linear-gradient(#fafbfb,#d5dadd);border:1px solid #8c959b;border-radius:3px;box-shadow:0 1px 0 rgba(255,255,255,.5);"></div><svg class="a" style="left:777px;top:232px" width="15" height="15"><path d="M3.6 7.6 L6.3 10.4 L11.6 4.4" fill="none" stroke="#3d444b" stroke-width="1.7"/></svg>
<div class="t" style="left:805.5px;top:228.00px;font-size:13px;color:#1f2328;">сессии</div>
<div class="a" style="left:859px;top:232px;width:15px;height:15px;background:linear-gradient(#fafbfb,#d5dadd);border:1px solid #8c959b;border-radius:3px;box-shadow:0 1px 0 rgba(255,255,255,.5);"></div><svg class="a" style="left:859px;top:232px" width="15" height="15"><path d="M3.6 7.6 L6.3 10.4 L11.6 4.4" fill="none" stroke="#3d444b" stroke-width="1.7"/></svg>
<div class="t" style="left:887px;top:228.00px;font-size:13px;color:#1f2328;">события</div>
<div class="a" style="left:950px;top:232px;width:15px;height:15px;background:linear-gradient(#fafbfb,#d5dadd);border:1px solid #8c959b;border-radius:3px;box-shadow:0 1px 0 rgba(255,255,255,.5);"></div><svg class="a" style="left:950px;top:232px" width="15" height="15"><path d="M3.6 7.6 L6.3 10.4 L11.6 4.4" fill="none" stroke="#3d444b" stroke-width="1.7"/></svg>
<div class="t" style="left:978px;top:228.00px;font-size:13px;color:#1f2328;">посетителей</div>
<div class="a" style="left:1065px;top:232px;width:15px;height:15px;background:linear-gradient(#fafbfb,#d5dadd);border:1px solid #8c959b;border-radius:3px;box-shadow:0 1px 0 rgba(255,255,255,.5);"></div><svg class="a" style="left:1065px;top:232px" width="15" height="15"><path d="M3.6 7.6 L6.3 10.4 L11.6 4.4" fill="none" stroke="#3d444b" stroke-width="1.7"/></svg>
<div class="t" style="left:1093px;top:228.00px;font-size:13px;color:#1f2328;">новых</div>
<div class="t" style="left:1093px;top:244.00px;font-size:13px;color:#1f2328;">посетителей</div>
<div class="a" style="left:1181px;top:228px;width:30px;height:25px;background:linear-gradient(#ffffff,#f3f6f7 45%,#dde4e7);border:1px solid #c2cacf;border-bottom-color:#a9b3b8;border-radius:3px;box-shadow:0 1px 1px rgba(0,0,0,.12);"></div><div class="a" style="left:1190px;top:239px;width:12px;height:3px;background:#59636b;"></div>
<div class="a" style="left:487px;top:275px;width:744px;height:2px;border-top:1px solid #9eaab0;border-bottom:1px solid #e4e9ec;"></div>
<div class="a" style="left:509px;top:292px;width:90px;height:30px;background:linear-gradient(#ffffff,#f3f6f7 45%,#dde4e7);border:1px solid #c2cacf;border-bottom-color:#a9b3b8;border-radius:3px;box-shadow:0 1px 1px rgba(0,0,0,.12);"></div>
<div class="t" style="left:511.5px;top:299.00px;font-size:13px;color:#3e464e;font-weight:bold;width:90px;text-align:center;">Построить</div>
<div class="a" style="left:607px;top:292px;width:90px;height:30px;background:linear-gradient(#ffffff,#f3f6f7 45%,#dde4e7);border:1px solid #c2cacf;border-bottom-color:#a9b3b8;border-radius:3px;box-shadow:0 1px 1px rgba(0,0,0,.12);"></div>
<div class="t" style="left:607.0px;top:299.00px;font-size:13px;color:#3e464e;font-weight:bold;width:90px;text-align:center;">Отменить</div>
<div class="a" style="left:1119px;top:291px;width:37px;height:31px;background:linear-gradient(#ffffff,#f3f6f7 45%,#dde4e7);border:1px solid #c2cacf;border-bottom-color:#a9b3b8;border-radius:3px;box-shadow:0 1px 1px rgba(0,0,0,.12);"></div>
<svg class="a" style="left:0;top:0;overflow:visible" width="1" height="1"><circle cx="1137.5" cy="306.5" r="5.60" fill="#5d676e"/><circle cx="1143.24" cy="306.50" r="1.54" fill="#5d676e"/><circle cx="1141.56" cy="310.56" r="1.54" fill="#5d676e"/><circle cx="1137.50" cy="312.24" r="1.54" fill="#5d676e"/><circle cx="1133.44" cy="310.56" r="1.54" fill="#5d676e"/><circle cx="1131.76" cy="306.50" r="1.54" fill="#5d676e"/><circle cx="1133.44" cy="302.44" r="1.54" fill="#5d676e"/><circle cx="1137.50" cy="300.76" r="1.54" fill="#5d676e"/><circle cx="1141.56" cy="302.44" r="1.54" fill="#5d676e"/><circle cx="1137.5" cy="306.5" r="2.94" fill="#e9eef0"/></svg>
<div class="a" style="left:1173px;top:291px;width:38px;height:31px;background:linear-gradient(#ffffff,#f3f6f7 45%,#dde4e7);border:1px solid #c2cacf;border-bottom-color:#a9b3b8;border-radius:3px;box-shadow:0 1px 1px rgba(0,0,0,.12);"></div>
<div class="a" style="left:1185px;top:305px;width:14px;height:3px;background:#59636b;"></div><div class="a" style="left:1190.5px;top:299.5px;width:3px;height:14px;background:#59636b;"></div>
<div class="a" style="left:487px;top:358px;width:1997px;height:538px;background:#fff;border:1px solid #cbd4d9;border-radius:4px;"></div>
<div class="t" style="left:504.5px;top:384.22px;font-size:21px;color:#111;">График посещаемости по датам</div>
<svg class="a" style="left:0;top:0;overflow:visible" width="2504" height="1900">
<path d="M1186.5 452V816 M1221.5 452V816 M1255.5 452V816 M1290.5 452V816 M1325.5 452V816 M1360.5 452V816 M1395.5 452V816 M1430.5 452V816 M1464.5 452V816 M1499.5 452V816 M1534.5 452V816 M1569.5 452V816 M1604.5 452V816 M1639.5 452V816 M1673.5 452V816 M1154 795.5H1675 M1154 773.5H1675 M1154 752.5H1675 M1154 731.5H1675 M1154 709.5H1675 M1154 688.5H1675 M1154 666.5H1675 M1154 645.5H1675 M1154 624.5H1675 M1154 602.5H1675 M1154 581.5H1675 M1154 559.5H1675 M1154 538.5H1675 M1154 517.5H1675 M1154 495.5H1675 M1154 474.5H1675 M1154 452.5H1675" stroke="#b3b3b3" stroke-width="1" stroke-dasharray="1 2" fill="none"/>
<path d="M1151.5 452V816.5H1674" stroke="#000" stroke-width="1" fill="none"/>
<defs><path id="gf0" d="M2 0h1v1h-1zM1 1h1v1h-1zM3 1h1v1h-1zM0 2h1v1h-1zM4 2h1v1h-1zM0 3h1v1h-1zM4 3h1v1h-1zM0 4h1v1h-1zM4 4h1v1h-1zM0 5h1v1h-1zM4 5h1v1h-1zM1 6h1v1h-1zM3 6h1v1h-1zM2 7h1v1h-1z"/><path id="gf1" d="M2 0h1v1h-1zM1 1h2v1h-2zM0 2h1v1h-1zM2 2h1v1h-1zM2 3h1v1h-1zM2 4h1v1h-1zM2 5h1v1h-1zM2 6h1v1h-1zM0 7h5v1h-5z"/><path id="gf2" d="M1 0h3v1h-3zM0 1h1v1h-1zM4 1h1v1h-1zM4 2h1v1h-1zM3 3h1v1h-1zM2 4h1v1h-1zM1 5h1v1h-1zM0 6h1v1h-1zM0 7h5v1h-5z"/><path id="gf3" d="M1 0h3v1h-3zM0 1h1v1h-1zM4 1h1v1h-1zM4 2h1v1h-1zM2 3h2v1h-2zM4 4h1v1h-1zM4 5h1v1h-1zM0 6h1v1h-1zM4 6h1v1h-1zM1 7h3v1h-3z"/><path id="gf4" d="M3 0h1v1h-1zM2 1h2v1h-2zM1 2h1v1h-1zM3 2h1v1h-1zM0 3h1v1h-1zM3 3h1v1h-1zM0 4h1v1h-1zM3 4h1v1h-1zM0 5h5v1h-5zM3 6h1v1h-1zM3 7h1v1h-1z"/><path id="gf5" d="M0 0h5v1h-5zM0 1h1v1h-1zM0 2h4v1h-4zM0 3h1v1h-1zM4 3h1v1h-1zM4 4h1v1h-1zM4 5h1v1h-1zM0 6h1v1h-1zM4 6h1v1h-1zM1 7h3v1h-3z"/><path id="gf6" d="M2 0h3v1h-3zM1 1h1v1h-1zM0 2h1v1h-1zM0 3h4v1h-4zM0 4h1v1h-1zM4 4h1v1h-1zM0 5h1v1h-1zM4 5h1v1h-1zM0 6h1v1h-1zM4 6h1v1h-1zM1 7h3v1h-3z"/><path id="gf7" d="M0 0h5v1h-5zM4 1h1v1h-1zM3 2h1v1h-1zM3 3h1v1h-1zM2 4h1v1h-1zM2 5h1v1h-1zM1 6h1v1h-1zM1 7h1v1h-1z"/><path id="gf8" d="M1 0h3v1h-3zM0 1h1v1h-1zM4 1h1v1h-1zM0 2h1v1h-1zM4 2h1v1h-1zM1 3h3v1h-3zM0 4h1v1h-1zM4 4h1v1h-1zM0 5h1v1h-1zM4 5h1v1h-1zM0 6h1v1h-1zM4 6h1v1h-1zM1 7h3v1h-3z"/><path id="gf9" d="M1 0h3v1h-3zM0 1h1v1h-1zM4 1h1v1h-1zM0 2h1v1h-1zM4 2h1v1h-1zM0 3h1v1h-1zM4 3h1v1h-1zM1 4h4v1h-4zM4 5h1v1h-1zM3 6h1v1h-1zM0 7h3v1h-3z"/><path id="gfd" d="M2 6h2v1h-2zM2 7h2v1h-2z"/></defs>
<g fill="#000" shape-rendering="crispEdges">
<use href="#gf0" x="1130" y="810"/>
<use href="#gf5" x="1124" y="789"/><use href="#gf9" x="1130" y="789"/>
<use href="#gf1" x="1118" y="767"/><use href="#gf1" x="1124" y="767"/><use href="#gf8" x="1130" y="767"/>
<use href="#gf1" x="1118" y="746"/><use href="#gf7" x="1124" y="746"/><use href="#gf7" x="1130" y="746"/>
<use href="#gf2" x="1118" y="725"/><use href="#gf3" x="1124" y="725"/><use href="#gf6" x="1130" y="725"/>
<use href="#gf2" x="1118" y="703"/><use href="#gf9" x="1124" y="703"/><use href="#gf5" x="1130" y="703"/>
<use href="#gf3" x="1118" y="682"/><use href="#gf5" x="1124" y="682"/><use href="#gf4" x="1130" y="682"/>
<use href="#gf4" x="1118" y="660"/><use href="#gf1" x="1124" y="660"/><use href="#gf3" x="1130" y="660"/>
<use href="#gf4" x="1118" y="639"/><use href="#gf7" x="1124" y="639"/><use href="#gf2" x="1130" y="639"/>
<use href="#gf5" x="1118" y="618"/><use href="#gf3" x="1124" y="618"/><use href="#gf1" x="1130" y="618"/>
<use href="#gf5" x="1118" y="596"/><use href="#gf9" x="1124" y="596"/><use href="#gf0" x="1130" y="596"/>
<use href="#gf6" x="1118" y="575"/><use href="#gf4" x="1124" y="575"/><use href="#gf9" x="1130" y="575"/>
<use href="#gf7" x="1118" y="553"/><use href="#gf0" x="1124" y="553"/><use href="#gf8" x="1130" y="553"/>
<use href="#gf7" x="1118" y="532"/><use href="#gf6" x="1124" y="532"/><use href="#gf7" x="1130" y="532"/>
<use href="#gf8" x="1118" y="511"/><use href="#gf2" x="1124" y="511"/><use href="#gf6" x="1130" y="511"/>
<use href="#gf8" x="1118" y="489"/><use href="#gf8" x="1124" y="489"/><use href="#gf5" x="1130" y="489"/>
<use href="#gf9" x="1118" y="468"/><use href="#gf4" x="1124" y="468"/><use href="#gf4" x="1130" y="468"/>
<use href="#gf1" x="1112" y="446"/><use href="#gf0" x="1118" y="446"/><use href="#gf0" x="1124" y="446"/><use href="#gf3" x="1130" y="446"/>
<use href="#gf0" x="1137" y="825"/><use href="#gf3" x="1143" y="825"/><use href="#gfd" x="1149" y="825"/><use href="#gf0" x="1155" y="825"/><use href="#gf5" x="1161" y="825"/>
<use href="#gf0" x="1172" y="825"/><use href="#gf9" x="1178" y="825"/><use href="#gfd" x="1184" y="825"/><use href="#gf0" x="1190" y="825"/><use href="#gf5" x="1196" y="825"/>
<use href="#gf1" x="1207" y="825"/><use href="#gf5" x="1213" y="825"/><use href="#gfd" x="1219" y="825"/><use href="#gf0" x="1225" y="825"/><use href="#gf5" x="1231" y="825"/>
<use href="#gf2" x="1241" y="825"/><use href="#gf1" x="1247" y="825"/><use href="#gfd" x="1253" y="825"/><use href="#gf0" x="1259" y="825"/><use href="#gf5" x="1265" y="825"/>
<use href="#gf2" x="1276" y="825"/><use href="#gf7" x="1282" y="825"/><use href="#gfd" x="1288" y="825"/><use href="#gf0" x="1294" y="825"/><use href="#gf5" x="1300" y="825"/>
<use href="#gf0" x="1311" y="825"/><use href="#gf2" x="1317" y="825"/><use href="#gfd" x="1323" y="825"/><use href="#gf0" x="1329" y="825"/><use href="#gf6" x="1335" y="825"/>
<use href="#gf0" x="1346" y="825"/><use href="#gf8" x="1352" y="825"/><use href="#gfd" x="1358" y="825"/><use href="#gf0" x="1364" y="825"/><use href="#gf6" x="1370" y="825"/>
<use href="#gf1" x="1381" y="825"/><use href="#gf4" x="1387" y="825"/><use href="#gfd" x="1393" y="825"/><use href="#gf0" x="1399" y="825"/><use href="#gf6" x="1405" y="825"/>
<use href="#gf2" x="1416" y="825"/><use href="#gf0" x="1422" y="825"/><use href="#gfd" x="1428" y="825"/><use href="#gf0" x="1434" y="825"/><use href="#gf6" x="1440" y="825"/>
<use href="#gf2" x="1450" y="825"/><use href="#gf6" x="1456" y="825"/><use href="#gfd" x="1462" y="825"/><use href="#gf0" x="1468" y="825"/><use href="#gf6" x="1474" y="825"/>
<use href="#gf0" x="1485" y="825"/><use href="#gf2" x="1491" y="825"/><use href="#gfd" x="1497" y="825"/><use href="#gf0" x="1503" y="825"/><use href="#gf7" x="1509" y="825"/>
<use href="#gf0" x="1520" y="825"/><use href="#gf8" x="1526" y="825"/><use href="#gfd" x="1532" y="825"/><use href="#gf0" x="1538" y="825"/><use href="#gf7" x="1544" y="825"/>
<use href="#gf1" x="1555" y="825"/><use href="#gf4" x="1561" y="825"/><use href="#gfd" x="1567" y="825"/><use href="#gf0" x="1573" y="825"/><use href="#gf7" x="1579" y="825"/>
<use href="#gf2" x="1590" y="825"/><use href="#gf0" x="1596" y="825"/><use href="#gfd" x="1602" y="825"/><use href="#gf0" x="1608" y="825"/><use href="#gf7" x="1614" y="825"/>
<use href="#gf2" x="1625" y="825"/><use href="#gf6" x="1631" y="825"/><use href="#gfd" x="1637" y="825"/><use href="#gf0" x="1643" y="825"/><use href="#gf7" x="1649" y="825"/>
<use href="#gf0" x="1659" y="825"/><use href="#gf1" x="1665" y="825"/><use href="#gfd" x="1671" y="825"/><use href="#gf0" x="1677" y="825"/><use href="#gf8" x="1683" y="825"/>
</g>
<polyline points="1151.5,710.0 1157.3,710.0 1163.1,703.8 1168.9,734.3 1174.7,780.0 1180.5,782.1 1186.3,689.7 1192.1,671.2 1197.9,686.0 1203.7,699.8 1209.5,748.0 1215.4,770.9 1221.2,780.0 1227.0,686.0 1232.8,654.1 1238.6,666.4 1244.4,699.8 1250.2,688.2 1256.0,672.2 1261.8,625.5 1267.6,715.8 1273.4,790.1 1279.2,784.7 1285.0,768.4 1290.8,775.3 1296.6,773.1 1302.4,780.0 1308.2,762.9 1314.0,757.1 1319.8,719.4 1325.7,729.2 1331.5,726.6 1337.3,775.3 1343.1,774.9 1348.9,782.1 1354.7,759.3 1360.5,750.2 1366.3,743.0 1372.1,757.5 1377.9,637.4 1383.7,713.6 1389.5,711.1 1395.3,704.5 1401.1,782.1 1406.9,777.1 1412.7,722.7 1418.5,665.7 1424.3,694.0 1430.1,692.6 1435.9,699.8 1441.8,715.8 1447.6,704.5 1453.4,692.9 1459.2,687.8 1465.0,692.9 1470.8,706.7 1476.6,713.6 1482.4,700.9 1488.2,690.7 1494.0,695.8 1499.8,712.5 1505.6,667.5 1511.4,675.1 1517.2,707.1 1523.0,704.5 1528.8,698.0 1534.6,701.6 1540.4,681.3 1546.2,705.6 1552.0,696.2 1557.8,712.5 1563.7,699.1 1569.5,678.4 1575.3,691.1 1581.1,711.4 1586.9,699.1 1592.7,704.5 1598.5,690.7 1604.3,695.5 1610.1,695.1 1615.9,707.8 1621.7,682.4 1627.5,688.6 1633.3,688.6 1639.1,698.0 1644.9,698.4 1650.7,686.0 1656.5,701.6 1662.3,681.3 1668.1,679.9" fill="none" stroke="#0000ff" stroke-width="2" stroke-linejoin="miter" stroke-miterlimit="3"/>
<polyline points="1151.5,618.6 1157.3,612.4 1163.1,614.2 1168.9,645.8 1174.7,654.1 1180.5,670.1 1186.3,619.6 1192.1,591.4 1197.9,602.2 1203.7,624.0 1209.5,648.3 1215.4,672.2 1221.2,690.7 1227.0,614.9 1232.8,547.5 1238.6,583.0 1244.4,614.9 1250.2,599.0 1256.0,580.5 1261.8,536.9 1267.6,617.5 1273.4,678.0 1279.2,667.5 1285.0,680.2 1290.8,675.9 1296.6,682.8 1302.4,697.6 1308.2,671.2 1314.0,667.5 1319.8,618.6 1325.7,636.7 1331.5,638.5 1337.3,726.3 1343.1,711.1 1348.9,695.1 1354.7,680.2 1360.5,662.1 1366.3,620.7 1372.1,678.0 1377.9,494.9 1383.7,608.0 1389.5,601.1 1395.3,597.2 1401.1,655.2 1406.9,649.8 1412.7,609.1 1418.5,564.5 1424.3,601.1 1430.1,609.9 1435.9,615.3 1441.8,648.3 1447.6,617.5 1453.4,616.7 1459.2,607.7 1465.0,621.8 1470.8,622.9 1476.6,626.9 1482.4,628.7 1488.2,628.7 1494.0,615.3 1499.8,614.9 1505.6,558.7 1511.4,587.4 1517.2,619.6 1523.0,624.0 1528.8,592.1 1534.6,608.0 1540.4,621.8 1546.2,626.5 1552.0,606.2 1557.8,634.2 1563.7,620.0 1569.5,584.8 1575.3,602.6 1581.1,590.6 1586.9,605.9 1592.7,618.2 1598.5,598.6 1604.3,621.8 1610.1,599.7 1615.9,608.8 1621.7,598.6 1627.5,622.5 1633.3,600.1 1639.1,581.2 1644.9,616.4 1650.7,611.7 1656.5,609.5 1662.3,580.5 1668.1,589.9" fill="none" stroke="#ff0000" stroke-width="2" stroke-linejoin="miter" stroke-miterlimit="3"/>
<polyline points="1151.5,816.2 1157.3,816.2 1163.1,816.6 1168.9,816.2 1174.7,816.2 1180.5,816.6 1186.3,816.6 1192.1,816.2 1197.9,815.9 1203.7,816.2 1209.5,815.5 1215.4,812.6 1221.2,813.3 1227.0,815.1 1232.8,816.2 1238.6,816.6 1244.4,816.2 1250.2,816.6 1256.0,815.9 1261.8,816.6 1267.6,816.2 1273.4,815.9 1279.2,816.2 1285.0,816.6 1290.8,815.9 1296.6,811.5 1302.4,812.2 1308.2,815.5 1314.0,816.6 1319.8,816.2 1325.7,816.2 1331.5,816.6 1337.3,815.9 1343.1,815.1 1348.9,816.6 1354.7,816.2 1360.5,816.6 1366.3,815.9 1372.1,816.2 1377.9,815.5 1383.7,815.9 1389.5,816.2 1395.3,816.6 1401.1,815.9 1406.9,816.2 1412.7,815.5 1418.5,814.8 1424.3,815.9 1430.1,803.9 1435.9,815.5 1441.8,816.2 1447.6,816.6 1453.4,813.3 1459.2,815.9 1465.0,816.2 1470.8,815.1 1476.6,815.9 1482.4,816.2 1488.2,815.5 1494.0,815.9 1499.8,816.6 1505.6,816.2 1511.4,815.5 1517.2,816.6 1523.0,815.9 1528.8,815.1 1534.6,814.4 1540.4,815.9 1546.2,816.2 1552.0,815.9 1557.8,815.9 1563.7,808.6 1569.5,816.6 1575.3,814.8 1581.1,814.8 1586.9,815.9 1592.7,816.2 1598.5,815.1 1604.3,816.2 1610.1,815.1 1615.9,813.7 1621.7,815.9 1627.5,816.6 1633.3,814.1 1639.1,814.8 1644.9,816.2 1650.7,814.8 1656.5,816.2 1662.3,812.6 1668.1,815.5" fill="none" stroke="#7f7fbf" stroke-width="2" stroke-linejoin="miter" stroke-miterlimit="3"/>
<polyline points="1151.5,622.2 1157.3,616.0 1163.1,617.8 1168.9,648.7 1174.7,657.0 1180.5,672.6 1186.3,623.3 1192.1,595.3 1197.9,606.2 1203.7,627.6 1209.5,651.2 1215.4,674.8 1221.2,692.9 1227.0,618.6 1232.8,552.2 1238.6,587.4 1244.4,618.6 1250.2,603.0 1256.0,584.8 1261.8,542.0 1267.6,621.1 1273.4,680.6 1279.2,670.1 1285.0,682.8 1290.8,678.4 1296.6,685.3 1302.4,699.8 1308.2,673.7 1314.0,670.1 1319.8,622.2 1325.7,640.0 1331.5,641.8 1337.3,727.7 1343.1,712.9 1348.9,697.3 1354.7,682.8 1360.5,665.0 1366.3,624.4 1372.1,680.6 1377.9,500.7 1383.7,611.7 1389.5,605.1 1395.3,601.1 1401.1,658.1 1406.9,652.7 1412.7,612.8 1418.5,569.2 1424.3,605.1 1430.1,613.5 1435.9,618.9 1441.8,651.2 1447.6,621.1 1453.4,620.4 1459.2,611.3 1465.0,625.5 1470.8,626.5 1476.6,630.2 1482.4,632.0 1488.2,632.0 1494.0,618.9 1499.8,618.6 1505.6,561.3 1511.4,589.9 1517.2,620.7 1523.0,625.5 1528.8,606.2 1534.6,609.9 1540.4,624.0 1546.2,627.6 1552.0,611.3 1557.8,634.5 1563.7,621.5 1569.5,590.6 1575.3,604.1 1581.1,624.0 1586.9,612.4 1592.7,621.5 1598.5,600.1 1604.3,624.4 1610.1,604.1 1615.9,612.0 1621.7,601.5 1627.5,624.0 1633.3,604.4 1639.1,583.0 1644.9,617.1 1650.7,614.2 1656.5,611.3 1662.3,585.6 1668.1,593.2" fill="none" stroke="#00cc55" stroke-width="2" stroke-linejoin="miter" stroke-miterlimit="3"/>
<polyline points="1151.5,626.9 1157.3,621.1 1163.1,622.5 1168.9,653.0 1174.7,661.0 1180.5,676.2 1186.3,628.0 1192.1,600.8 1197.9,611.3 1203.7,632.0 1209.5,655.2 1215.4,678.4 1221.2,696.2 1227.0,623.3 1232.8,558.7 1238.6,592.8 1244.4,623.3 1250.2,608.0 1256.0,590.3 1261.8,548.6 1267.6,625.8 1273.4,683.8 1279.2,673.7 1285.0,686.0 1290.8,681.7 1296.6,688.2 1302.4,702.7 1308.2,677.3 1314.0,673.7 1319.8,626.9 1325.7,644.3 1331.5,646.1 1337.3,729.9 1343.1,715.4 1348.9,700.2 1354.7,686.0 1360.5,668.6 1366.3,629.1 1372.1,683.8 1377.9,508.3 1383.7,616.7 1389.5,610.2 1395.3,606.2 1401.1,662.1 1406.9,656.6 1412.7,617.8 1418.5,575.0 1424.3,610.2 1430.1,618.6 1435.9,623.6 1441.8,655.2 1447.6,625.8 1453.4,625.1 1459.2,616.4 1465.0,630.2 1470.8,630.9 1476.6,634.9 1482.4,636.7 1488.2,636.7 1494.0,623.6 1499.8,623.3 1505.6,565.6 1511.4,592.1 1517.2,621.8 1523.0,626.5 1528.8,609.5 1534.6,611.7 1540.4,627.6 1546.2,630.9 1552.0,613.8 1557.8,636.3 1563.7,623.6 1569.5,593.5 1575.3,608.0 1581.1,631.6 1586.9,618.2 1592.7,626.5 1598.5,604.1 1604.3,630.5 1610.1,608.8 1615.9,617.8 1621.7,606.6 1627.5,628.7 1633.3,608.8 1639.1,584.1 1644.9,618.2 1650.7,616.7 1656.5,613.5 1662.3,591.4 1668.1,598.6" fill="none" stroke="#c6dd1a" stroke-width="2" stroke-linejoin="miter" stroke-miterlimit="3"/>
<rect x="1722" y="606" width="45" height="2" fill="#0000ff"/>
<text x="1777.5" y="608" font-family="Liberation Sans" font-size="12" fill="#111">хосты</text>
<rect x="1722" y="624" width="45" height="2" fill="#ff0000"/>
<text x="1777.5" y="626" font-family="Liberation Sans" font-size="12" fill="#111">сессии</text>
<rect x="1722" y="642" width="45" height="2" fill="#7878c0"/>
<text x="1777.5" y="644" font-family="Liberation Sans" font-size="12" fill="#111">события</text>
<rect x="1722" y="660" width="45" height="2" fill="#00c853"/>
<text x="1777.5" y="662" font-family="Liberation Sans" font-size="12" fill="#111">посетителей</text>
<rect x="1722" y="678" width="45" height="2" fill="#c2da10"/>
<text x="1777.5" y="680" font-family="Liberation Sans" font-size="12" fill="#111">новых посетителей</text>
</svg>
<div class="t" style="left:487px;top:918.07px;font-size:20px;color:#1e1e1e;font-weight:bold;">Таблица посещаемости по датам</div>
<div class="a" style="left:487px;top:957px;width:1996px;height:48px;background:linear-gradient(#d8dfe2,#e7ecee);border:1px solid #d3dbdf;border-top-color:#fbfcfc;border-bottom:none;border-radius:5px 5px 0 0;"></div>
<div class="a" style="left:496px;top:966px;width:210px;height:30px;background:linear-gradient(#ffffff,#f3f6f7 45%,#dde4e7);border:1px solid #c2cacf;border-bottom-color:#a9b3b8;border-radius:3px;box-shadow:0 1px 1px rgba(0,0,0,.12);"></div>
<div class="t" style="left:511px;top:973.00px;font-size:13px;color:#535b63;font-weight:bold;">Сгруппировано по датам</div>
<svg class="a" style="left:687px;top:979px" width="8" height="5"><path d="M0 0H8L4 4.5Z" fill="#8a939a"/></svg>
<div class="a" style="left:2434px;top:966px;width:41px;height:31px;background:linear-gradient(#ffffff,#eef2f3 45%,#d3dade);border:1px solid #7d898f;border-radius:4px;"></div>
<svg class="a" style="left:0;top:0;overflow:visible" width="1" height="1"><circle cx="2455" cy="981" r="5.60" fill="#5d676e"/><circle cx="2460.74" cy="981.00" r="1.54" fill="#5d676e"/><circle cx="2459.06" cy="985.06" r="1.54" fill="#5d676e"/><circle cx="2455.00" cy="986.74" r="1.54" fill="#5d676e"/><circle cx="2450.94" cy="985.06" r="1.54" fill="#5d676e"/><circle cx="2449.26" cy="981.00" r="1.54" fill="#5d676e"/><circle cx="2450.94" cy="976.94" r="1.54" fill="#5d676e"/><circle cx="2455.00" cy="975.26" r="1.54" fill="#5d676e"/><circle cx="2459.06" cy="976.94" r="1.54" fill="#5d676e"/><circle cx="2455" cy="981" r="2.94" fill="#e9eef0"/></svg>
<div class="a" style="left:487px;top:1004px;width:1996px;height:34px;background:linear-gradient(#bcc6cb,#a8b3b9);border-top:1px solid #97aab8;border-bottom:1px solid #86939a;border-left:1px solid #d0d8dc;border-right:1px solid #86939a;"></div>
<div class="a" style="left:626px;top:1005px;width:2px;height:32px;border-left:1px solid #97a3a9;border-right:1px solid #cdd5d9;"></div>
<div class="a" style="left:835px;top:1005px;width:2px;height:32px;border-left:1px solid #97a3a9;border-right:1px solid #cdd5d9;"></div>
<div class="a" style="left:1137px;top:1005px;width:2px;height:32px;border-left:1px solid #97a3a9;border-right:1px solid #cdd5d9;"></div>
<div class="a" style="left:1325px;top:1005px;width:2px;height:32px;border-left:1px solid #97a3a9;border-right:1px solid #cdd5d9;"></div>
<div class="a" style="left:1531px;top:1005px;width:2px;height:32px;border-left:1px solid #97a3a9;border-right:1px solid #cdd5d9;"></div>
<div class="a" style="left:1740px;top:1005px;width:2px;height:32px;border-left:1px solid #97a3a9;border-right:1px solid #cdd5d9;"></div>
<div class="a" style="left:1980px;top:1005px;width:2px;height:32px;border-left:1px solid #97a3a9;border-right:1px solid #cdd5d9;"></div>
<div class="a" style="left:2281px;top:1005px;width:2px;height:32px;border-left:1px solid #97a3a9;border-right:1px solid #cdd5d9;"></div>
<div class="t" style="left:505px;top:1013.80px;font-size:13px;color:#1d2125;font-weight:bold;">ID</div>
<div class="t" style="left:644px;top:1013.80px;font-size:13px;color:#1d2125;font-weight:bold;">Дата</div>
<div class="t" style="left:853px;top:1013.80px;font-size:13px;color:#1d2125;font-weight:bold;">День недели</div>
<div class="t" style="left:1155px;top:1013.80px;font-size:13px;color:#1d2125;font-weight:bold;">Хитов</div>
<div class="t" style="left:1343px;top:1013.80px;font-size:13px;color:#1d2125;font-weight:bold;">Хостов</div>
<div class="t" style="left:1549px;top:1013.80px;font-size:13px;color:#1d2125;font-weight:bold;">Сессий</div>
<div class="t" style="left:1758px;top:1013.80px;font-size:13px;color:#1d2125;font-weight:bold;">Событий</div>
<div class="t" style="left:1998px;top:1013.80px;font-size:13px;color:#1d2125;font-weight:bold;">Посетителей</div>
<div class="t" style="left:2299px;top:1013.80px;font-size:13px;color:#1d2125;font-weight:bold;">Новых</div>
<div class="a" style="left:487px;top:1038px;width:1996px;height:721px;background:#fff;border-left:1px solid #cfd7db;border-right:1px solid #cfd7db;border-bottom:1px solid #aab4b9;"></div>
<div class="a" style="left:488px;top:1038px;width:1994px;height:36px;background:#f5f8f9;"></div>
<div class="t" style="left:510.5px;top:1050.30px;font-size:13px;color:#1a1a1a;width:100px;text-align:right;">658</div>
<div class="t" style="left:643px;top:1050.30px;font-size:13px;color:#1a1a1a;">31.07.2025</div>
<div class="t" style="left:852.7px;top:1050.30px;font-size:13px;color:#1a1a1a;">Чт</div>
<div class="t" style="left:1210px;top:1050.30px;font-size:13px;color:#3a64a3;width:100px;text-align:right;">3460</div>
<div class="t" style="left:1416px;top:1050.30px;font-size:13px;color:#1a1a1a;width:100px;text-align:right;">377</div>
<div class="t" style="left:1625px;top:1050.30px;font-size:13px;color:#3a64a3;width:100px;text-align:right;">625</div>
<div class="t" style="left:1865px;top:1050.30px;font-size:13px;color:#3a64a3;width:100px;text-align:right;">3</div>
<div class="t" style="left:2166px;top:1050.30px;font-size:13px;color:#3a64a3;width:100px;text-align:right;">616</div>
<div class="t" style="left:2367px;top:1050.30px;font-size:13px;color:#3a64a3;width:100px;text-align:right;">601</div>
<div class="t" style="left:510.5px;top:1086.30px;font-size:13px;color:#1a1a1a;width:100px;text-align:right;">657</div>
<div class="t" style="left:643px;top:1086.30px;font-size:13px;color:#1a1a1a;">30.07.2025</div>
<div class="t" style="left:852.7px;top:1086.30px;font-size:13px;color:#1a1a1a;">Ср</div>
<div class="t" style="left:1210px;top:1086.30px;font-size:13px;color:#3a64a3;width:100px;text-align:right;">4650</div>
<div class="t" style="left:1416px;top:1086.30px;font-size:13px;color:#1a1a1a;width:100px;text-align:right;">373</div>
<div class="t" style="left:1625px;top:1086.30px;font-size:13px;color:#3a64a3;width:100px;text-align:right;">651</div>
<div class="t" style="left:1865px;top:1086.30px;font-size:13px;color:#3a64a3;width:100px;text-align:right;">11</div>
<div class="t" style="left:2166px;top:1086.30px;font-size:13px;color:#3a64a3;width:100px;text-align:right;">637</div>
<div class="t" style="left:2367px;top:1086.30px;font-size:13px;color:#3a64a3;width:100px;text-align:right;">621</div>
<div class="a" style="left:488px;top:1110px;width:1994px;height:36px;background:#f5f8f9;"></div>
<div class="t" style="left:510.5px;top:1122.30px;font-size:13px;color:#1a1a1a;width:100px;text-align:right;">656</div>
<div class="t" style="left:643px;top:1122.30px;font-size:13px;color:#1a1a1a;">29.07.2025</div>
<div class="t" style="left:852.7px;top:1122.30px;font-size:13px;color:#1a1a1a;">Вт</div>
<div class="t" style="left:1210px;top:1122.30px;font-size:13px;color:#3a64a3;width:100px;text-align:right;">3472</div>
<div class="t" style="left:1416px;top:1122.30px;font-size:13px;color:#1a1a1a;width:100px;text-align:right;">317</div>
<div class="t" style="left:1625px;top:1122.30px;font-size:13px;color:#3a64a3;width:100px;text-align:right;">571</div>
<div class="t" style="left:1865px;top:1122.30px;font-size:13px;color:#3a64a3;width:100px;text-align:right;">1</div>
<div class="t" style="left:2166px;top:1122.30px;font-size:13px;color:#3a64a3;width:100px;text-align:right;">566</div>
<div class="t" style="left:2367px;top:1122.30px;font-size:13px;color:#3a64a3;width:100px;text-align:right;">560</div>
<div class="t" style="left:510.5px;top:1158.30px;font-size:13px;color:#1a1a1a;width:100px;text-align:right;">655</div>
<div class="t" style="left:643px;top:1158.30px;font-size:13px;color:#1a1a1a;">28.07.2025</div>
<div class="t" style="left:852.7px;top:1158.30px;font-size:13px;color:#1a1a1a;">Пн</div>
<div class="t" style="left:1210px;top:1158.30px;font-size:13px;color:#3a64a3;width:100px;text-align:right;">3512</div>
<div class="t" style="left:1416px;top:1158.30px;font-size:13px;color:#1a1a1a;width:100px;text-align:right;">360</div>
<div class="t" style="left:1625px;top:1158.30px;font-size:13px;color:#3a64a3;width:100px;text-align:right;">565</div>
<div class="t" style="left:1865px;top:1158.30px;font-size:13px;color:#3a64a3;width:100px;text-align:right;">5</div>
<div class="t" style="left:2166px;top:1158.30px;font-size:13px;color:#3a64a3;width:100px;text-align:right;">558</div>
<div class="t" style="left:2367px;top:1158.30px;font-size:13px;color:#3a64a3;width:100px;text-align:right;">551</div>
<div class="a" style="left:488px;top:1182px;width:1994px;height:36px;background:#f5f8f9;"></div>
<div class="t" style="left:510.5px;top:1194.30px;font-size:13px;color:#1a1a1a;width:100px;text-align:right;">654</div>
<div class="t" style="left:643px;top:1194.30px;font-size:13px;color:#1a1a1a;">27.07.2025</div>
<div class="t" style="left:852.7px;top:1194.30px;font-size:13px;color:#e0201b;">Вс</div>
<div class="t" style="left:1210px;top:1194.30px;font-size:13px;color:#3a64a3;width:100px;text-align:right;">2431</div>
<div class="t" style="left:1416px;top:1194.30px;font-size:13px;color:#1a1a1a;width:100px;text-align:right;">326</div>
<div class="t" style="left:1625px;top:1194.30px;font-size:13px;color:#3a64a3;width:100px;text-align:right;">552</div>
<div class="t" style="left:1865px;top:1194.30px;font-size:13px;color:#3a64a3;width:100px;text-align:right;">1</div>
<div class="t" style="left:2166px;top:1194.30px;font-size:13px;color:#3a64a3;width:100px;text-align:right;">550</div>
<div class="t" style="left:2367px;top:1194.30px;font-size:13px;color:#3a64a3;width:100px;text-align:right;">547</div>
<div class="t" style="left:510.5px;top:1230.30px;font-size:13px;color:#1a1a1a;width:100px;text-align:right;">653</div>
<div class="t" style="left:643px;top:1230.30px;font-size:13px;color:#1a1a1a;">26.07.2025</div>
<div class="t" style="left:852.7px;top:1230.30px;font-size:13px;color:#1a1a1a;">Сб</div>
<div class="t" style="left:1210px;top:1230.30px;font-size:13px;color:#3a64a3;width:100px;text-align:right;">3352</div>
<div class="t" style="left:1416px;top:1230.30px;font-size:13px;color:#1a1a1a;width:100px;text-align:right;">327</div>
<div class="t" style="left:1625px;top:1230.30px;font-size:13px;color:#3a64a3;width:100px;text-align:right;">649</div>
<div class="t" style="left:1865px;top:1230.30px;font-size:13px;color:#3a64a3;width:100px;text-align:right;">5</div>
<div class="t" style="left:2166px;top:1230.30px;font-size:13px;color:#3a64a3;width:100px;text-align:right;">644</div>
<div class="t" style="left:2367px;top:1230.30px;font-size:13px;color:#3a64a3;width:100px;text-align:right;">641</div>
<div class="a" style="left:488px;top:1254px;width:1994px;height:36px;background:#f5f8f9;"></div>
<div class="t" style="left:510.5px;top:1266.30px;font-size:13px;color:#1a1a1a;width:100px;text-align:right;">652</div>
<div class="t" style="left:643px;top:1266.30px;font-size:13px;color:#1a1a1a;">25.07.2025</div>
<div class="t" style="left:852.7px;top:1266.30px;font-size:13px;color:#1a1a1a;">Пт</div>
<div class="t" style="left:1210px;top:1266.30px;font-size:13px;color:#3a64a3;width:100px;text-align:right;">3980</div>
<div class="t" style="left:1416px;top:1266.30px;font-size:13px;color:#1a1a1a;width:100px;text-align:right;">353</div>
<div class="t" style="left:1625px;top:1266.30px;font-size:13px;color:#3a64a3;width:100px;text-align:right;">597</div>
<div class="t" style="left:1865px;top:1266.30px;font-size:13px;color:#3a64a3;width:100px;text-align:right;">7</div>
<div class="t" style="left:2166px;top:1266.30px;font-size:13px;color:#3a64a3;width:100px;text-align:right;">585</div>
<div class="t" style="left:2367px;top:1266.30px;font-size:13px;color:#3a64a3;width:100px;text-align:right;">573</div>
<div class="t" style="left:510.5px;top:1302.30px;font-size:13px;color:#1a1a1a;width:100px;text-align:right;">651</div>
<div class="t" style="left:643px;top:1302.30px;font-size:13px;color:#1a1a1a;">24.07.2025</div>
<div class="t" style="left:852.7px;top:1302.30px;font-size:13px;color:#1a1a1a;">Чт</div>
<div class="t" style="left:1210px;top:1302.30px;font-size:13px;color:#3a64a3;width:100px;text-align:right;">4384</div>
<div class="t" style="left:1416px;top:1302.30px;font-size:13px;color:#1a1a1a;width:100px;text-align:right;">353</div>
<div class="t" style="left:1625px;top:1302.30px;font-size:13px;color:#3a64a3;width:100px;text-align:right;">535</div>
<div class="t" style="left:1865px;top:1302.30px;font-size:13px;color:#3a64a3;width:100px;text-align:right;">0</div>
<div class="t" style="left:2166px;top:1302.30px;font-size:13px;color:#3a64a3;width:100px;text-align:right;">531</div>
<div class="t" style="left:2367px;top:1302.30px;font-size:13px;color:#3a64a3;width:100px;text-align:right;">518</div>
<div class="a" style="left:488px;top:1326px;width:1994px;height:36px;background:#f5f8f9;"></div>
<div class="t" style="left:510.5px;top:1338.30px;font-size:13px;color:#1a1a1a;width:100px;text-align:right;">650</div>
<div class="t" style="left:643px;top:1338.30px;font-size:13px;color:#1a1a1a;">23.07.2025</div>
<div class="t" style="left:852.7px;top:1338.30px;font-size:13px;color:#1a1a1a;">Ср</div>
<div class="t" style="left:1210px;top:1338.30px;font-size:13px;color:#3a64a3;width:100px;text-align:right;">3092</div>
<div class="t" style="left:1416px;top:1338.30px;font-size:13px;color:#1a1a1a;width:100px;text-align:right;">370</div>
<div class="t" style="left:1625px;top:1338.30px;font-size:13px;color:#3a64a3;width:100px;text-align:right;">601</div>
<div class="t" style="left:1865px;top:1338.30px;font-size:13px;color:#3a64a3;width:100px;text-align:right;">2</div>
<div class="t" style="left:2166px;top:1338.30px;font-size:13px;color:#3a64a3;width:100px;text-align:right;">593</div>
<div class="t" style="left:2367px;top:1338.30px;font-size:13px;color:#3a64a3;width:100px;text-align:right;">579</div>
<div class="t" style="left:510.5px;top:1374.30px;font-size:13px;color:#1a1a1a;width:100px;text-align:right;">649</div>
<div class="t" style="left:643px;top:1374.30px;font-size:13px;color:#1a1a1a;">22.07.2025</div>
<div class="t" style="left:852.7px;top:1374.30px;font-size:13px;color:#1a1a1a;">Вт</div>
<div class="t" style="left:1210px;top:1374.30px;font-size:13px;color:#3a64a3;width:100px;text-align:right;">3305</div>
<div class="t" style="left:1416px;top:1374.30px;font-size:13px;color:#1a1a1a;width:100px;text-align:right;">300</div>
<div class="t" style="left:1625px;top:1374.30px;font-size:13px;color:#3a64a3;width:100px;text-align:right;">573</div>
<div class="t" style="left:1865px;top:1374.30px;font-size:13px;color:#3a64a3;width:100px;text-align:right;">8</div>
<div class="t" style="left:2166px;top:1374.30px;font-size:13px;color:#3a64a3;width:100px;text-align:right;">564</div>
<div class="t" style="left:2367px;top:1374.30px;font-size:13px;color:#3a64a3;width:100px;text-align:right;">548</div>
<div class="a" style="left:488px;top:1398px;width:1994px;height:36px;background:#f5f8f9;"></div>
<div class="t" style="left:510.5px;top:1410.30px;font-size:13px;color:#1a1a1a;width:100px;text-align:right;">648</div>
<div class="t" style="left:643px;top:1410.30px;font-size:13px;color:#1a1a1a;">21.07.2025</div>
<div class="t" style="left:852.7px;top:1410.30px;font-size:13px;color:#1a1a1a;">Пн</div>
<div class="t" style="left:1210px;top:1410.30px;font-size:13px;color:#3a64a3;width:100px;text-align:right;">3385</div>
<div class="t" style="left:1416px;top:1410.30px;font-size:13px;color:#1a1a1a;width:100px;text-align:right;">335</div>
<div class="t" style="left:1625px;top:1410.30px;font-size:13px;color:#3a64a3;width:100px;text-align:right;">598</div>
<div class="t" style="left:1865px;top:1410.30px;font-size:13px;color:#3a64a3;width:100px;text-align:right;">4</div>
<div class="t" style="left:2166px;top:1410.30px;font-size:13px;color:#3a64a3;width:100px;text-align:right;">586</div>
<div class="t" style="left:2367px;top:1410.30px;font-size:13px;color:#3a64a3;width:100px;text-align:right;">573</div>
<div class="t" style="left:510.5px;top:1446.30px;font-size:13px;color:#1a1a1a;width:100px;text-align:right;">647</div>
<div class="t" style="left:643px;top:1446.30px;font-size:13px;color:#1a1a1a;">20.07.2025</div>
<div class="t" style="left:852.7px;top:1446.30px;font-size:13px;color:#e0201b;">Вс</div>
<div class="t" style="left:1210px;top:1446.30px;font-size:13px;color:#3a64a3;width:100px;text-align:right;">3113</div>
<div class="t" style="left:1416px;top:1446.30px;font-size:13px;color:#1a1a1a;width:100px;text-align:right;">334</div>
<div class="t" style="left:1625px;top:1446.30px;font-size:13px;color:#3a64a3;width:100px;text-align:right;">537</div>
<div class="t" style="left:1865px;top:1446.30px;font-size:13px;color:#3a64a3;width:100px;text-align:right;">1</div>
<div class="t" style="left:2166px;top:1446.30px;font-size:13px;color:#3a64a3;width:100px;text-align:right;">530</div>
<div class="t" style="left:2367px;top:1446.30px;font-size:13px;color:#3a64a3;width:100px;text-align:right;">513</div>
<div class="a" style="left:488px;top:1470px;width:1994px;height:36px;background:#f5f8f9;"></div>
<div class="t" style="left:510.5px;top:1482.30px;font-size:13px;color:#1a1a1a;width:100px;text-align:right;">646</div>
<div class="t" style="left:643px;top:1482.30px;font-size:13px;color:#1a1a1a;">19.07.2025</div>
<div class="t" style="left:852.7px;top:1482.30px;font-size:13px;color:#1a1a1a;">Сб</div>
<div class="t" style="left:1210px;top:1482.30px;font-size:13px;color:#3a64a3;width:100px;text-align:right;">3509</div>
<div class="t" style="left:1416px;top:1482.30px;font-size:13px;color:#1a1a1a;width:100px;text-align:right;">347</div>
<div class="t" style="left:1625px;top:1482.30px;font-size:13px;color:#3a64a3;width:100px;text-align:right;">601</div>
<div class="t" style="left:1865px;top:1482.30px;font-size:13px;color:#3a64a3;width:100px;text-align:right;">4</div>
<div class="t" style="left:2166px;top:1482.30px;font-size:13px;color:#3a64a3;width:100px;text-align:right;">597</div>
<div class="t" style="left:2367px;top:1482.30px;font-size:13px;color:#3a64a3;width:100px;text-align:right;">586</div>
<div class="t" style="left:510.5px;top:1518.30px;font-size:13px;color:#1a1a1a;width:100px;text-align:right;">645</div>
<div class="t" style="left:643px;top:1518.30px;font-size:13px;color:#1a1a1a;">18.07.2025</div>
<div class="t" style="left:852.7px;top:1518.30px;font-size:13px;color:#1a1a1a;">Пт</div>
<div class="t" style="left:1210px;top:1518.30px;font-size:13px;color:#3a64a3;width:100px;text-align:right;">5153</div>
<div class="t" style="left:1416px;top:1518.30px;font-size:13px;color:#1a1a1a;width:100px;text-align:right;">309</div>
<div class="t" style="left:1625px;top:1518.30px;font-size:13px;color:#3a64a3;width:100px;text-align:right;">547</div>
<div class="t" style="left:1865px;top:1518.30px;font-size:13px;color:#3a64a3;width:100px;text-align:right;">1</div>
<div class="t" style="left:2166px;top:1518.30px;font-size:13px;color:#3a64a3;width:100px;text-align:right;">538</div>
<div class="t" style="left:2367px;top:1518.30px;font-size:13px;color:#3a64a3;width:100px;text-align:right;">524</div>
<div class="a" style="left:488px;top:1542px;width:1994px;height:36px;background:#f5f8f9;"></div>
<div class="t" style="left:510.5px;top:1554.30px;font-size:13px;color:#1a1a1a;width:100px;text-align:right;">644</div>
<div class="t" style="left:643px;top:1554.30px;font-size:13px;color:#1a1a1a;">17.07.2025</div>
<div class="t" style="left:852.7px;top:1554.30px;font-size:13px;color:#1a1a1a;">Чт</div>
<div class="t" style="left:1210px;top:1554.30px;font-size:13px;color:#3a64a3;width:100px;text-align:right;">5005</div>
<div class="t" style="left:1416px;top:1554.30px;font-size:13px;color:#1a1a1a;width:100px;text-align:right;">324</div>
<div class="t" style="left:1625px;top:1554.30px;font-size:13px;color:#3a64a3;width:100px;text-align:right;">581</div>
<div class="t" style="left:1865px;top:1554.30px;font-size:13px;color:#3a64a3;width:100px;text-align:right;">2</div>
<div class="t" style="left:2166px;top:1554.30px;font-size:13px;color:#3a64a3;width:100px;text-align:right;">563</div>
<div class="t" style="left:2367px;top:1554.30px;font-size:13px;color:#3a64a3;width:100px;text-align:right;">547</div>
<div class="t" style="left:510.5px;top:1590.30px;font-size:13px;color:#1a1a1a;width:100px;text-align:right;">643</div>
<div class="t" style="left:643px;top:1590.30px;font-size:13px;color:#1a1a1a;">16.07.2025</div>
<div class="t" style="left:852.7px;top:1590.30px;font-size:13px;color:#1a1a1a;">Ср</div>
<div class="t" style="left:1210px;top:1590.30px;font-size:13px;color:#3a64a3;width:100px;text-align:right;">3321</div>
<div class="t" style="left:1416px;top:1590.30px;font-size:13px;color:#1a1a1a;width:100px;text-align:right;">290</div>
<div class="t" style="left:1625px;top:1590.30px;font-size:13px;color:#3a64a3;width:100px;text-align:right;">623</div>
<div class="t" style="left:1865px;top:1590.30px;font-size:13px;color:#3a64a3;width:100px;text-align:right;">5</div>
<div class="t" style="left:2166px;top:1590.30px;font-size:13px;color:#3a64a3;width:100px;text-align:right;">531</div>
<div class="t" style="left:2367px;top:1590.30px;font-size:13px;color:#3a64a3;width:100px;text-align:right;">510</div>
<div class="a" style="left:488px;top:1614px;width:1994px;height:36px;background:#f5f8f9;"></div>
<div class="t" style="left:510.5px;top:1626.30px;font-size:13px;color:#1a1a1a;width:100px;text-align:right;">642</div>
<div class="t" style="left:643px;top:1626.30px;font-size:13px;color:#1a1a1a;">15.07.2025</div>
<div class="t" style="left:852.7px;top:1626.30px;font-size:13px;color:#1a1a1a;">Вт</div>
<div class="t" style="left:1210px;top:1626.30px;font-size:13px;color:#3a64a3;width:100px;text-align:right;">3231</div>
<div class="t" style="left:1416px;top:1626.30px;font-size:13px;color:#1a1a1a;width:100px;text-align:right;">346</div>
<div class="t" style="left:1625px;top:1626.30px;font-size:13px;color:#3a64a3;width:100px;text-align:right;">590</div>
<div class="t" style="left:1865px;top:1626.30px;font-size:13px;color:#3a64a3;width:100px;text-align:right;">5</div>
<div class="t" style="left:2166px;top:1626.30px;font-size:13px;color:#3a64a3;width:100px;text-align:right;">586</div>
<div class="t" style="left:2367px;top:1626.30px;font-size:13px;color:#3a64a3;width:100px;text-align:right;">575</div>
<div class="t" style="left:510.5px;top:1662.30px;font-size:13px;color:#1a1a1a;width:100px;text-align:right;">641</div>
<div class="t" style="left:643px;top:1662.30px;font-size:13px;color:#1a1a1a;">14.07.2025</div>
<div class="t" style="left:852.7px;top:1662.30px;font-size:13px;color:#1a1a1a;">Пн</div>
<div class="t" style="left:1210px;top:1662.30px;font-size:13px;color:#3a64a3;width:100px;text-align:right;">3430</div>
<div class="t" style="left:1416px;top:1662.30px;font-size:13px;color:#1a1a1a;width:100px;text-align:right;">381</div>
<div class="t" style="left:1625px;top:1662.30px;font-size:13px;color:#3a64a3;width:100px;text-align:right;">639</div>
<div class="t" style="left:1865px;top:1662.30px;font-size:13px;color:#3a64a3;width:100px;text-align:right;">0</div>
<div class="t" style="left:2166px;top:1662.30px;font-size:13px;color:#3a64a3;width:100px;text-align:right;">623</div>
<div class="t" style="left:2367px;top:1662.30px;font-size:13px;color:#3a64a3;width:100px;text-align:right;">615</div>
<div class="a" style="left:488px;top:1686px;width:1994px;height:36px;background:#f5f8f9;"></div>
<div class="t" style="left:510.5px;top:1698.30px;font-size:13px;color:#1a1a1a;width:100px;text-align:right;">640</div>
<div class="t" style="left:643px;top:1698.30px;font-size:13px;color:#1a1a1a;">13.07.2025</div>
<div class="t" style="left:852.7px;top:1698.30px;font-size:13px;color:#e0201b;">Вс</div>
<div class="t" style="left:1210px;top:1698.30px;font-size:13px;color:#3a64a3;width:100px;text-align:right;">3394</div>
<div class="t" style="left:1416px;top:1698.30px;font-size:13px;color:#1a1a1a;width:100px;text-align:right;">324</div>
<div class="t" style="left:1625px;top:1698.30px;font-size:13px;color:#3a64a3;width:100px;text-align:right;">542</div>
<div class="t" style="left:1865px;top:1698.30px;font-size:13px;color:#3a64a3;width:100px;text-align:right;">22</div>
<div class="t" style="left:2166px;top:1698.30px;font-size:13px;color:#3a64a3;width:100px;text-align:right;">538</div>
<div class="t" style="left:2367px;top:1698.30px;font-size:13px;color:#3a64a3;width:100px;text-align:right;">532</div>
<div class="t" style="left:510.5px;top:1734.30px;font-size:13px;color:#1a1a1a;width:100px;text-align:right;">639</div>
<div class="t" style="left:643px;top:1734.30px;font-size:13px;color:#1a1a1a;">12.07.2025</div>
<div class="t" style="left:852.7px;top:1734.30px;font-size:13px;color:#1a1a1a;">Сб</div>
<div class="t" style="left:1210px;top:1734.30px;font-size:13px;color:#3a64a3;width:100px;text-align:right;">2838</div>
<div class="t" style="left:1416px;top:1734.30px;font-size:13px;color:#1a1a1a;width:100px;text-align:right;">287</div>
<div class="t" style="left:1625px;top:1734.30px;font-size:13px;color:#3a64a3;width:100px;text-align:right;">503</div>
<div class="t" style="left:1865px;top:1734.30px;font-size:13px;color:#3a64a3;width:100px;text-align:right;">2</div>
<div class="t" style="left:2166px;top:1734.30px;font-size:13px;color:#3a64a3;width:100px;text-align:right;">502</div>
<div class="t" style="left:2367px;top:1734.30px;font-size:13px;color:#3a64a3;width:100px;text-align:right;">497</div>
<div class="a" style="left:489px;top:1779px;width:26px;height:25px;background:linear-gradient(#ffffff,#e2e8eb);border:1px solid #b8c2c7;border-radius:3px;"></div>
<div class="t" style="left:489.0px;top:1783.61px;font-size:17px;color:#59636b;font-weight:bold;width:26px;text-align:center;">&lsaquo;</div>
<div class="a" style="left:524px;top:1779px;width:24px;height:25px;background:linear-gradient(#5b6169,#4d535b);border-radius:3px;box-shadow:0 1px 0 #fff;"></div>
<div class="t" style="left:524.0px;top:1786.84px;font-size:12px;color:#e9ecee;font-weight:bold;width:24px;text-align:center;">1</div>
<div class="a" style="left:556.5px;top:1779px;width:26px;height:25px;background:linear-gradient(#ffffff,#e2e8eb);border:1px solid #b8c2c7;border-radius:3px;"></div>
<div class="t" style="left:556.5px;top:1786.84px;font-size:12px;color:#59636b;font-weight:bold;width:26px;text-align:center;">2</div>
<div class="a" style="left:590.5px;top:1779px;width:26px;height:25px;background:linear-gradient(#ffffff,#e2e8eb);border:1px solid #b8c2c7;border-radius:3px;"></div>
<div class="t" style="left:590.5px;top:1786.84px;font-size:12px;color:#59636b;font-weight:bold;width:26px;text-align:center;">3</div>
<div class="a" style="left:624.5px;top:1779px;width:26px;height:25px;background:linear-gradient(#ffffff,#e2e8eb);border:1px solid #b8c2c7;border-radius:3px;"></div>
<div class="t" style="left:624.5px;top:1786.84px;font-size:12px;color:#59636b;font-weight:bold;width:26px;text-align:center;">4</div>
<div class="a" style="left:657.5px;top:1779px;width:26px;height:25px;background:linear-gradient(#ffffff,#e2e8eb);border:1px solid #b8c2c7;border-radius:3px;"></div>
<div class="t" style="left:657.5px;top:1786.84px;font-size:12px;color:#59636b;font-weight:bold;width:26px;text-align:center;">5</div>
<div class="a" style="left:691px;top:1779px;width:26px;height:25px;background:linear-gradient(#ffffff,#e2e8eb);border:1px solid #b8c2c7;border-radius:3px;"></div>
<div class="t" style="left:691.0px;top:1783.61px;font-size:17px;color:#59636b;font-weight:bold;width:26px;text-align:center;">&rsaquo;</div>
<div class="t" style="left:1488px;top:1786.19px;font-size:11px;color:#4a525a;">На странице:</div>
<div class="a" style="left:1568px;top:1777px;width:47px;height:29px;background:linear-gradient(#ffffff,#f1f4f5 50%,#e2e8ea);border:1px solid #c7d0d4;border-bottom-color:#aab4b9;border-radius:3px;"></div>
<div class="t" style="left:1574px;top:1785.50px;font-size:13px;color:#353b41;">20</div>
<svg class="a" style="left:1601px;top:1786px" width="7" height="12"><path d="M0.5 4.5 L3.5 0.5 L6.5 4.5Z M0.5 7.5 L3.5 11.5 L6.5 7.5Z" fill="#6f7880"/></svg>
<div class="t" style="left:2333.7px;top:1784.50px;font-size:13px;color:#3c434a;width:150px;text-align:right;">Дни 1 – 20 из 90</div>
<div class="a" style="left:467px;top:1829px;width:2037px;height:1px;background:#b1c1cd;"></div>
<div class="t" style="left:499.5px;top:1851.00px;font-size:13px;color:#535b64;">1С-Битрикс: Управление сайтом 25.100.500. © Битрикс, 2002-2025</div>
<div class="t" style="left:1867px;top:1851.00px;font-size:13px;color:#535b64;width:600px;text-align:right;">Правообладатели&nbsp; |&nbsp; ТехПоддержка: inoco.ru | Телеграм: inoco_web Почта: info@inoco.ru</div>
</body></html>
